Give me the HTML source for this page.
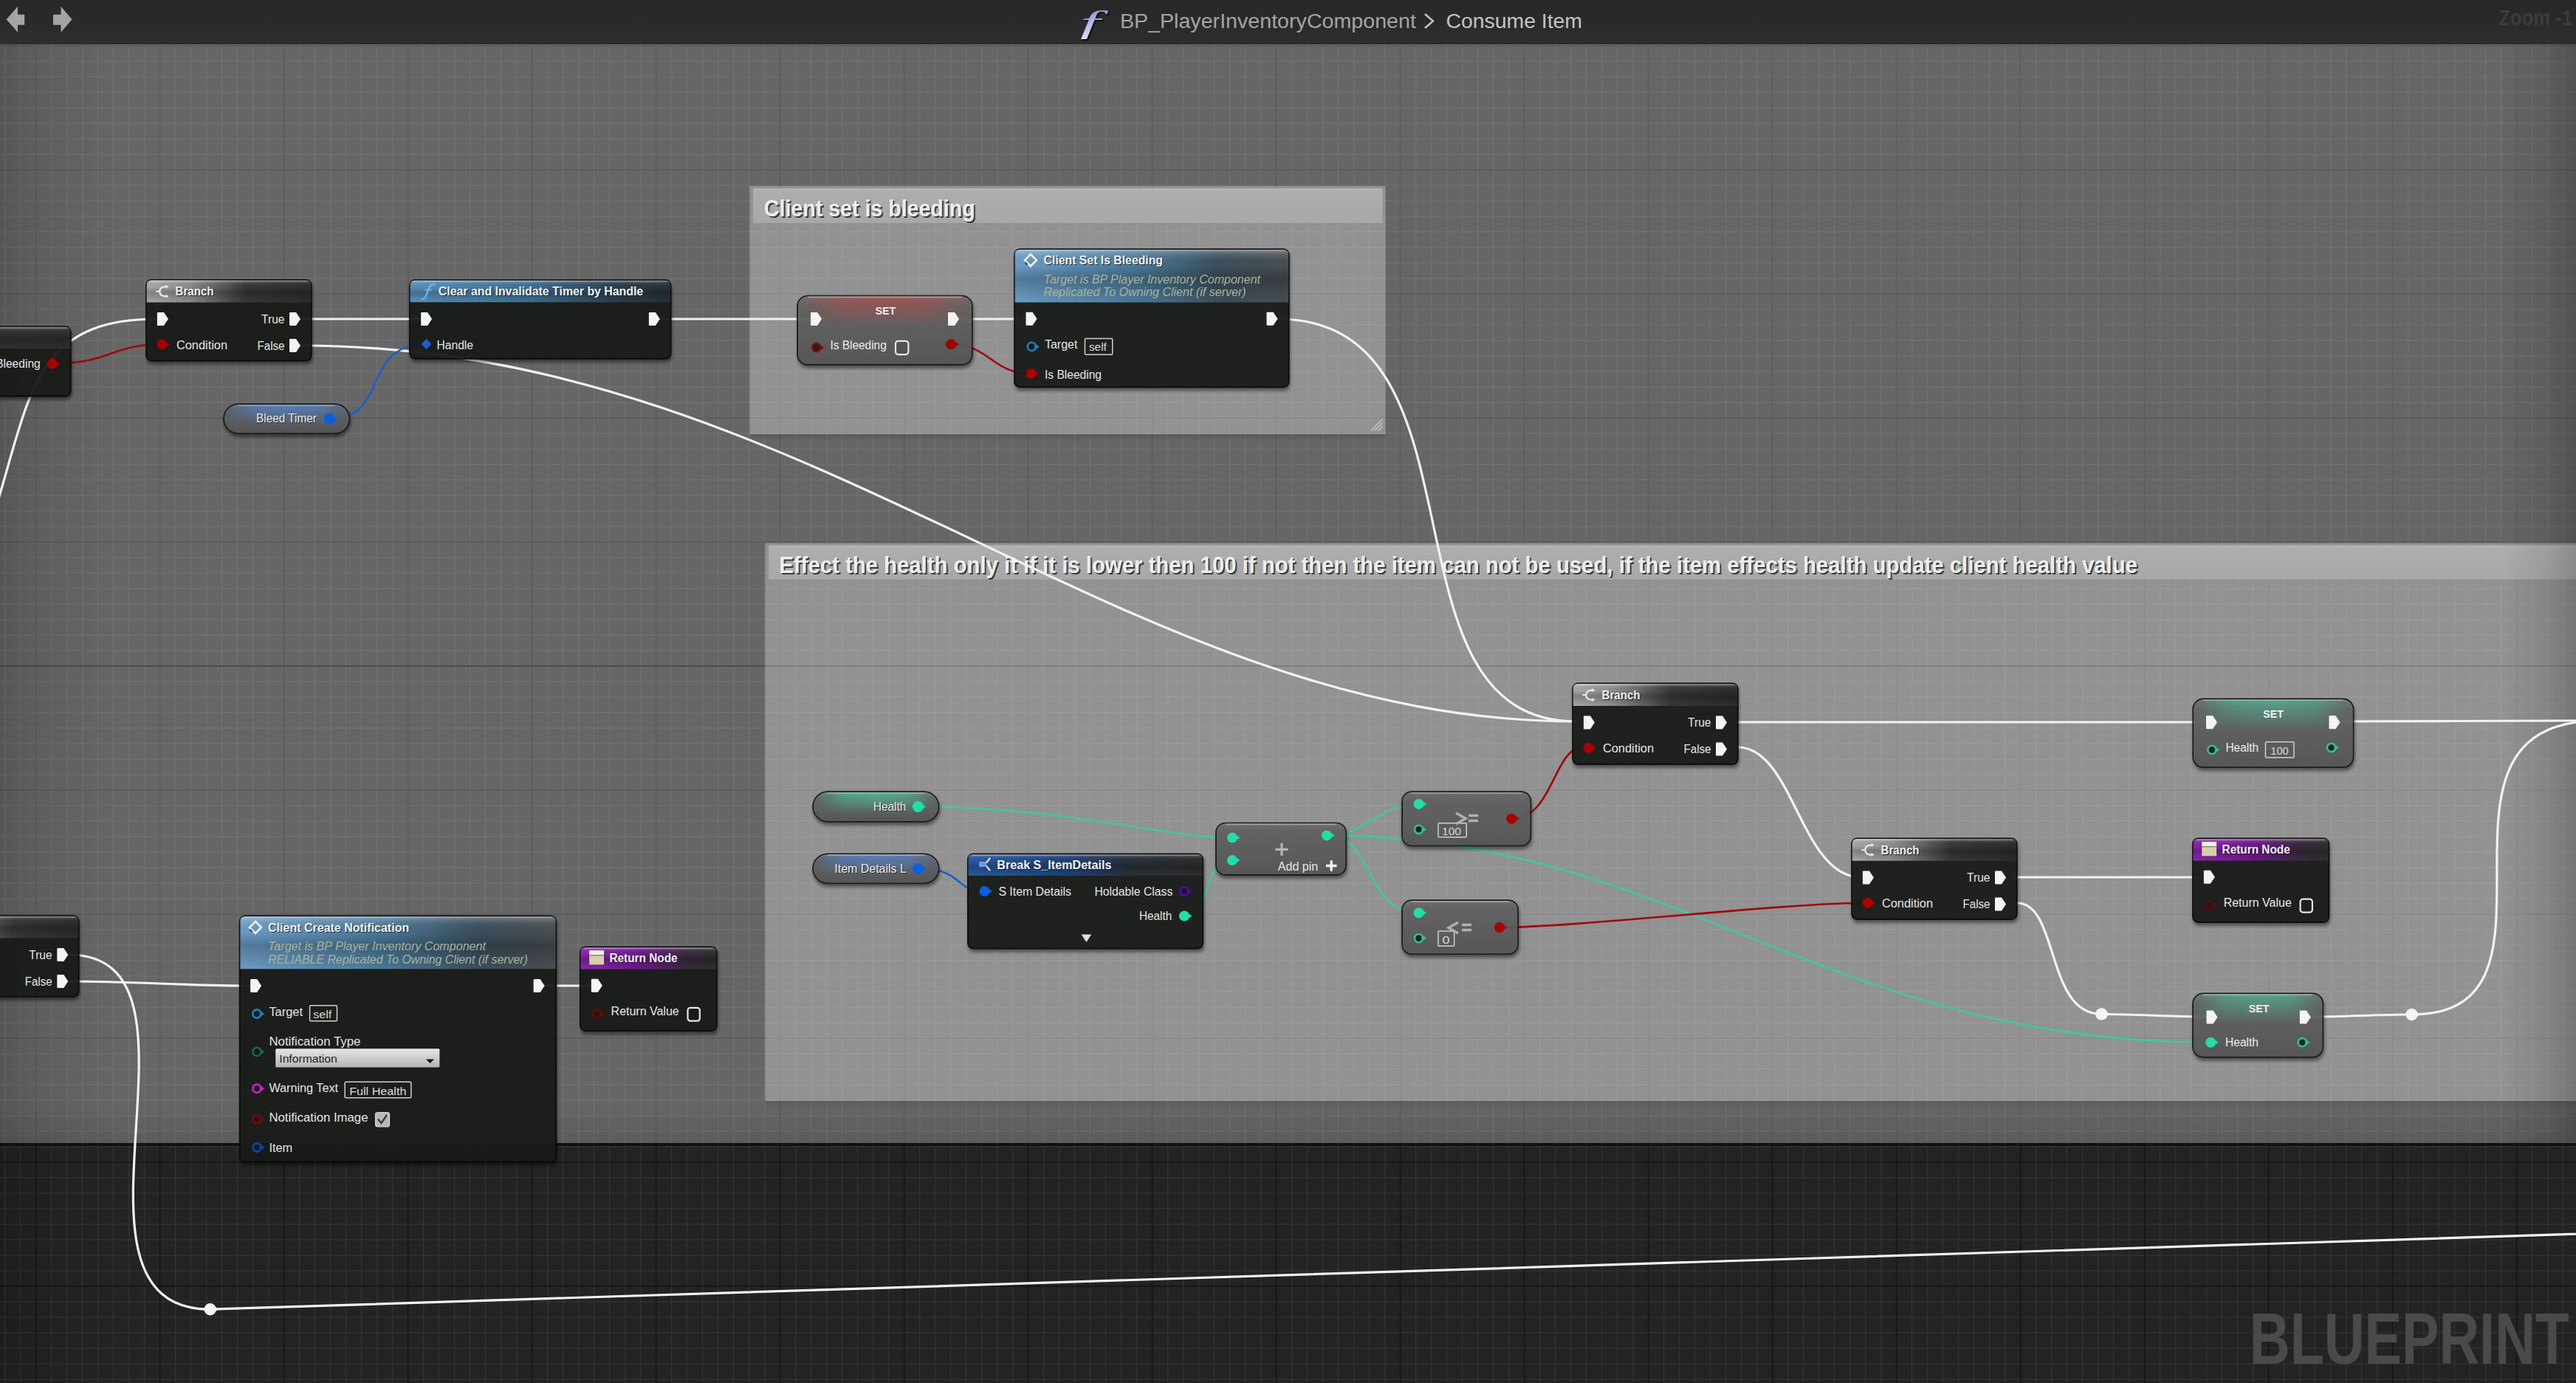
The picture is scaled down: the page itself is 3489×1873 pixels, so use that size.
<!DOCTYPE html>
<html><head><meta charset="utf-8"><style>
html,body{margin:0;padding:0;background:#666;overflow:hidden;width:3489px;height:1873px}
svg{display:block}
</style></head><body>
<svg width="3489" height="1873" viewBox="0 0 3489 1873">

<defs>
 <filter id="nshadow" x="-20%" y="-20%" width="140%" height="160%">
   <feGaussianBlur in="SourceAlpha" stdDeviation="3"/>
   <feOffset dx="1" dy="4"/>
   <feComponentTransfer><feFuncA type="linear" slope="0.55"/></feComponentTransfer>
   <feMerge><feMergeNode/><feMergeNode in="SourceGraphic"/></feMerge>
 </filter>
 <filter id="blur2"><feGaussianBlur stdDeviation="2"/></filter>
 <filter id="blur4"><feGaussianBlur stdDeviation="5"/></filter>
 <linearGradient id="vigL" x1="0" x2="1" y1="0" y2="0">
   <stop offset="0" stop-color="#000" stop-opacity="0.16"/>
   <stop offset="0.3" stop-color="#000" stop-opacity="0.08"/>
   <stop offset="1" stop-color="#000" stop-opacity="0"/>
 </linearGradient>
 <linearGradient id="vigR" x1="1" x2="0" y1="0" y2="0">
   <stop offset="0" stop-color="#000" stop-opacity="0.20"/>
   <stop offset="0.4" stop-color="#000" stop-opacity="0.09"/>
   <stop offset="1" stop-color="#000" stop-opacity="0"/>
 </linearGradient>
 <linearGradient id="vigB" x1="0" x2="0" y1="0" y2="1">
   <stop offset="0" stop-color="#000" stop-opacity="0"/>
   <stop offset="1" stop-color="#000" stop-opacity="0.10"/>
 </linearGradient>
 <linearGradient id="topbar" x1="0" x2="0" y1="0" y2="1">
   <stop offset="0" stop-color="#202020" stop-opacity="0.9"/>
   <stop offset="1" stop-color="#272727" stop-opacity="0.9"/>
 </linearGradient>
 <linearGradient id="cshadow" x1="0" x2="0" y1="0" y2="1">
   <stop offset="0" stop-color="#000" stop-opacity="0.10"/>
   <stop offset="1" stop-color="#000" stop-opacity="0"/>
 </linearGradient>
 <linearGradient id="ctitle" x1="0" x2="0" y1="0" y2="1">
   <stop offset="0" stop-color="#b4b4b4"/>
   <stop offset="0.12" stop-color="#adadad"/>
   <stop offset="1" stop-color="#a8a8a8"/>
 </linearGradient>
 <linearGradient id="fgrad" x1="0" x2="0" y1="0" y2="1">
   <stop offset="0" stop-color="#8a8fd8"/>
   <stop offset="1" stop-color="#d8dcf0"/>
 </linearGradient>
 <linearGradient id="hgloss" x1="0" x2="0" y1="0" y2="1">
   <stop offset="0" stop-color="#fff" stop-opacity="0.30"/>
   <stop offset="0.1" stop-color="#fff" stop-opacity="0.10"/>
   <stop offset="0.3" stop-color="#000" stop-opacity="0.0"/>
   <stop offset="0.55" stop-color="#000" stop-opacity="0.22"/>
   <stop offset="0.8" stop-color="#000" stop-opacity="0.10"/>
   <stop offset="1" stop-color="#000" stop-opacity="0.0"/>
 </linearGradient>
 <linearGradient id="hglossB" x1="0" x2="0" y1="0" y2="1">
   <stop offset="0" stop-color="#fff" stop-opacity="0.30"/>
   <stop offset="0.1" stop-color="#fff" stop-opacity="0.12"/>
   <stop offset="0.35" stop-color="#000" stop-opacity="0.0"/>
   <stop offset="1" stop-color="#000" stop-opacity="0.15"/>
 </linearGradient>
 <linearGradient id="cmpfill" x1="0" x2="0" y1="0" y2="1">
   <stop offset="0" stop-color="#707070"/>
   <stop offset="0.15" stop-color="#646464"/>
   <stop offset="0.6" stop-color="#5e5e5e"/>
   <stop offset="1" stop-color="#575757"/>
 </linearGradient>
 <linearGradient id="ddfill" x1="0" x2="0" y1="0" y2="1">
   <stop offset="0" stop-color="#e6e6e6"/>
   <stop offset="1" stop-color="#b4b4b4"/>
 </linearGradient>
</defs>

<defs><linearGradient id="hg1" x1="0" x2="1" y1="0" y2="0"><stop offset="0" stop-color="#a8a8a8" stop-opacity="1"/><stop offset="0.25" stop-color="#8c8c8c" stop-opacity="1"/><stop offset="0.6" stop-color="#383838" stop-opacity="1"/><stop offset="1" stop-color="#2c2c2c" stop-opacity="1"/></linearGradient><linearGradient id="hg2" x1="0" x2="1" y1="0" y2="0"><stop offset="0" stop-color="#a8a8a8" stop-opacity="1"/><stop offset="0.25" stop-color="#8c8c8c" stop-opacity="1"/><stop offset="0.6" stop-color="#383838" stop-opacity="1"/><stop offset="1" stop-color="#2c2c2c" stop-opacity="1"/></linearGradient><linearGradient id="hg3" x1="0" x2="1" y1="0" y2="0"><stop offset="0" stop-color="#a8a8a8" stop-opacity="1"/><stop offset="0.25" stop-color="#8c8c8c" stop-opacity="1"/><stop offset="0.6" stop-color="#383838" stop-opacity="1"/><stop offset="1" stop-color="#2c2c2c" stop-opacity="1"/></linearGradient><linearGradient id="hg4" x1="0" x2="1" y1="0" y2="0"><stop offset="0" stop-color="#4c7ba0" stop-opacity="1"/><stop offset="0.4" stop-color="#3c4c58" stop-opacity="1"/><stop offset="0.62" stop-color="#303230" stop-opacity="1"/><stop offset="1" stop-color="#2e2e2e" stop-opacity="1"/></linearGradient><linearGradient id="hg5" x1="0" x2="1" y1="0" y2="0"><stop offset="0" stop-color="#a8a8a8" stop-opacity="1"/><stop offset="0.25" stop-color="#8c8c8c" stop-opacity="1"/><stop offset="0.6" stop-color="#383838" stop-opacity="1"/><stop offset="1" stop-color="#2c2c2c" stop-opacity="1"/></linearGradient><linearGradient id="hg6" x1="0" x2="1" y1="0" y2="0"><stop offset="0" stop-color="#5a90bc" stop-opacity="1"/><stop offset="0.45" stop-color="#3f6f93" stop-opacity="1"/><stop offset="0.8" stop-color="#2c3e4c" stop-opacity="1"/><stop offset="1" stop-color="#283038" stop-opacity="1"/></linearGradient><radialGradient id="gl7" cx="0.5" cy="0.5" r="0.5"><stop offset="0" stop-color="#4f86d8" stop-opacity="0.75"/><stop offset="0.55" stop-color="#4f86d8" stop-opacity="0.41250000000000003"/><stop offset="1" stop-color="#4f86d8" stop-opacity="0"/></radialGradient><clipPath id="cl8"><rect x="304" y="548.2" width="168.5" height="38" rx="19"/></clipPath><linearGradient id="vg9" x1="0" x2="0" y1="0" y2="1"><stop offset="0" stop-color="#4f86d8" stop-opacity="0.75"/><stop offset="0.45" stop-color="#4f86d8" stop-opacity="0.44999999999999996"/><stop offset="1" stop-color="#4f86d8" stop-opacity="0"/></linearGradient><linearGradient id="hm11" x1="0" x2="1" y1="0" y2="0"><stop offset="0" stop-color="#fff" stop-opacity="0"/><stop offset="0.25" stop-color="#fff" stop-opacity="0.85"/><stop offset="0.5" stop-color="#fff" stop-opacity="1"/><stop offset="0.75" stop-color="#fff" stop-opacity="0.85"/><stop offset="1" stop-color="#fff" stop-opacity="0"/></linearGradient><mask id="mk10"><rect x="302" y="546.2" width="172.5" height="42" fill="url(#hm11)"/></mask><radialGradient id="gl12" cx="0.5" cy="0.5" r="0.5"><stop offset="0" stop-color="#c04848" stop-opacity="0.6"/><stop offset="0.55" stop-color="#c04848" stop-opacity="0.33"/><stop offset="1" stop-color="#c04848" stop-opacity="0"/></radialGradient><clipPath id="cl13"><rect x="1081.1" y="401.6" width="234.7" height="91.4" rx="13"/></clipPath><linearGradient id="vg14" x1="0" x2="0" y1="0" y2="1"><stop offset="0" stop-color="#c04848" stop-opacity="0.6"/><stop offset="0.45" stop-color="#c04848" stop-opacity="0.36"/><stop offset="1" stop-color="#c04848" stop-opacity="0"/></linearGradient><linearGradient id="hm16" x1="0" x2="1" y1="0" y2="0"><stop offset="0" stop-color="#fff" stop-opacity="0"/><stop offset="0.25" stop-color="#fff" stop-opacity="0.85"/><stop offset="0.5" stop-color="#fff" stop-opacity="1"/><stop offset="0.75" stop-color="#fff" stop-opacity="0.85"/><stop offset="1" stop-color="#fff" stop-opacity="0"/></linearGradient><mask id="mk15"><rect x="1079.1" y="399.6" width="238.7" height="95.4" fill="url(#hm16)"/></mask><linearGradient id="hg17" x1="0" x2="1" y1="0" y2="0"><stop offset="0" stop-color="#6a9cc4" stop-opacity="1"/><stop offset="0.45" stop-color="#4a7898" stop-opacity="1"/><stop offset="0.75" stop-color="#3a4e5c" stop-opacity="1"/><stop offset="1" stop-color="#4a4e50" stop-opacity="1"/></linearGradient><radialGradient id="gl18" cx="0.5" cy="0.5" r="0.5"><stop offset="0" stop-color="#48c8a0" stop-opacity="0.6"/><stop offset="0.55" stop-color="#48c8a0" stop-opacity="0.33"/><stop offset="1" stop-color="#48c8a0" stop-opacity="0"/></radialGradient><clipPath id="cl19"><rect x="2971.3" y="947.5" width="215.2" height="90.6" rx="13"/></clipPath><linearGradient id="vg20" x1="0" x2="0" y1="0" y2="1"><stop offset="0" stop-color="#48c8a0" stop-opacity="0.6"/><stop offset="0.45" stop-color="#48c8a0" stop-opacity="0.36"/><stop offset="1" stop-color="#48c8a0" stop-opacity="0"/></linearGradient><linearGradient id="hm22" x1="0" x2="1" y1="0" y2="0"><stop offset="0" stop-color="#fff" stop-opacity="0"/><stop offset="0.25" stop-color="#fff" stop-opacity="0.85"/><stop offset="0.5" stop-color="#fff" stop-opacity="1"/><stop offset="0.75" stop-color="#fff" stop-opacity="0.85"/><stop offset="1" stop-color="#fff" stop-opacity="0"/></linearGradient><mask id="mk21"><rect x="2969.3" y="945.5" width="219.2" height="94.6" fill="url(#hm22)"/></mask><radialGradient id="gl23" cx="0.5" cy="0.5" r="0.5"><stop offset="0" stop-color="#48c8a0" stop-opacity="0.75"/><stop offset="0.55" stop-color="#48c8a0" stop-opacity="0.41250000000000003"/><stop offset="1" stop-color="#48c8a0" stop-opacity="0"/></radialGradient><clipPath id="cl24"><rect x="1102.1" y="1073.2" width="168.5" height="38.6" rx="19"/></clipPath><linearGradient id="vg25" x1="0" x2="0" y1="0" y2="1"><stop offset="0" stop-color="#48c8a0" stop-opacity="0.75"/><stop offset="0.45" stop-color="#48c8a0" stop-opacity="0.44999999999999996"/><stop offset="1" stop-color="#48c8a0" stop-opacity="0"/></linearGradient><linearGradient id="hm27" x1="0" x2="1" y1="0" y2="0"><stop offset="0" stop-color="#fff" stop-opacity="0"/><stop offset="0.25" stop-color="#fff" stop-opacity="0.85"/><stop offset="0.5" stop-color="#fff" stop-opacity="1"/><stop offset="0.75" stop-color="#fff" stop-opacity="0.85"/><stop offset="1" stop-color="#fff" stop-opacity="0"/></linearGradient><mask id="mk26"><rect x="1100.1" y="1071.2" width="172.5" height="42.6" fill="url(#hm27)"/></mask><radialGradient id="gl28" cx="0.5" cy="0.5" r="0.5"><stop offset="0" stop-color="#4f86d8" stop-opacity="0.75"/><stop offset="0.55" stop-color="#4f86d8" stop-opacity="0.41250000000000003"/><stop offset="1" stop-color="#4f86d8" stop-opacity="0"/></radialGradient><clipPath id="cl29"><rect x="1102.1" y="1157.3" width="168.5" height="38" rx="19"/></clipPath><linearGradient id="vg30" x1="0" x2="0" y1="0" y2="1"><stop offset="0" stop-color="#4f86d8" stop-opacity="0.75"/><stop offset="0.45" stop-color="#4f86d8" stop-opacity="0.44999999999999996"/><stop offset="1" stop-color="#4f86d8" stop-opacity="0"/></linearGradient><linearGradient id="hm32" x1="0" x2="1" y1="0" y2="0"><stop offset="0" stop-color="#fff" stop-opacity="0"/><stop offset="0.25" stop-color="#fff" stop-opacity="0.85"/><stop offset="0.5" stop-color="#fff" stop-opacity="1"/><stop offset="0.75" stop-color="#fff" stop-opacity="0.85"/><stop offset="1" stop-color="#fff" stop-opacity="0"/></linearGradient><mask id="mk31"><rect x="1100.1" y="1155.3" width="172.5" height="42" fill="url(#hm32)"/></mask><linearGradient id="hg33" x1="0" x2="1" y1="0" y2="0"><stop offset="0" stop-color="#2a5aa0" stop-opacity="1"/><stop offset="0.4" stop-color="#1e4478" stop-opacity="1"/><stop offset="0.7" stop-color="#2a3038" stop-opacity="1"/><stop offset="1" stop-color="#2e2e2e" stop-opacity="1"/></linearGradient><radialGradient id="gl34" cx="0.5" cy="0.5" r="0.5"><stop offset="0" stop-color="None" stop-opacity="0.85"/><stop offset="0.55" stop-color="None" stop-opacity="0.4675"/><stop offset="1" stop-color="None" stop-opacity="0"/></radialGradient><clipPath id="cl35"><rect x="1648" y="1115.6" width="174.1" height="68.4" rx="12"/></clipPath><radialGradient id="gl36" cx="0.5" cy="0.5" r="0.5"><stop offset="0" stop-color="None" stop-opacity="0.85"/><stop offset="0.55" stop-color="None" stop-opacity="0.4675"/><stop offset="1" stop-color="None" stop-opacity="0"/></radialGradient><clipPath id="cl37"><rect x="1900.1" y="1073.2" width="172.2" height="71.2" rx="12"/></clipPath><radialGradient id="gl38" cx="0.5" cy="0.5" r="0.5"><stop offset="0" stop-color="None" stop-opacity="0.85"/><stop offset="0.55" stop-color="None" stop-opacity="0.4675"/><stop offset="1" stop-color="None" stop-opacity="0"/></radialGradient><clipPath id="cl39"><rect x="1900.1" y="1220.1" width="155" height="71.1" rx="12"/></clipPath><linearGradient id="hg40" x1="0" x2="1" y1="0" y2="0"><stop offset="0" stop-color="#8a26b0" stop-opacity="1"/><stop offset="0.45" stop-color="#6c1a8c" stop-opacity="1"/><stop offset="0.78" stop-color="#3a2a40" stop-opacity="1"/><stop offset="1" stop-color="#2e2e2e" stop-opacity="1"/></linearGradient><linearGradient id="hg41" x1="0" x2="1" y1="0" y2="0"><stop offset="0" stop-color="#8a26b0" stop-opacity="1"/><stop offset="0.45" stop-color="#6c1a8c" stop-opacity="1"/><stop offset="0.78" stop-color="#3a2a40" stop-opacity="1"/><stop offset="1" stop-color="#2e2e2e" stop-opacity="1"/></linearGradient><radialGradient id="gl42" cx="0.5" cy="0.5" r="0.5"><stop offset="0" stop-color="#48c8a0" stop-opacity="0.6"/><stop offset="0.55" stop-color="#48c8a0" stop-opacity="0.33"/><stop offset="1" stop-color="#48c8a0" stop-opacity="0"/></radialGradient><clipPath id="cl43"><rect x="2971.1" y="1346.4" width="174.2" height="84.4" rx="13"/></clipPath><linearGradient id="vg44" x1="0" x2="0" y1="0" y2="1"><stop offset="0" stop-color="#48c8a0" stop-opacity="0.6"/><stop offset="0.45" stop-color="#48c8a0" stop-opacity="0.36"/><stop offset="1" stop-color="#48c8a0" stop-opacity="0"/></linearGradient><linearGradient id="hm46" x1="0" x2="1" y1="0" y2="0"><stop offset="0" stop-color="#fff" stop-opacity="0"/><stop offset="0.25" stop-color="#fff" stop-opacity="0.85"/><stop offset="0.5" stop-color="#fff" stop-opacity="1"/><stop offset="0.75" stop-color="#fff" stop-opacity="0.85"/><stop offset="1" stop-color="#fff" stop-opacity="0"/></linearGradient><mask id="mk45"><rect x="2969.1" y="1344.4" width="178.2" height="88.4" fill="url(#hm46)"/></mask><linearGradient id="hg47" x1="0" x2="1" y1="0" y2="0"><stop offset="0" stop-color="#6a9cc4" stop-opacity="1"/><stop offset="0.45" stop-color="#4a7898" stop-opacity="1"/><stop offset="0.75" stop-color="#3a4e5c" stop-opacity="1"/><stop offset="1" stop-color="#4a4e50" stop-opacity="1"/></linearGradient></defs>
<rect x="0" y="0" width="3489" height="1548" fill="#666666"/>
<path d="M6.6 0V1548M27.6 0V1548M69.6 0V1548M90.6 0V1548M111.6 0V1548M132.6 0V1548M153.6 0V1548M174.6 0V1548M195.6 0V1548M237.6 0V1548M258.6 0V1548M279.6 0V1548M300.6 0V1548M321.6 0V1548M342.6 0V1548M363.6 0V1548M405.6 0V1548M426.6 0V1548M447.6 0V1548M468.6 0V1548M489.6 0V1548M510.6 0V1548M531.6 0V1548M573.6 0V1548M594.6 0V1548M615.6 0V1548M636.6 0V1548M657.6 0V1548M678.6 0V1548M699.6 0V1548M741.6 0V1548M762.6 0V1548M783.6 0V1548M804.6 0V1548M825.6 0V1548M846.6 0V1548M867.6 0V1548M909.6 0V1548M930.6 0V1548M951.6 0V1548M972.6 0V1548M993.6 0V1548M1014.6 0V1548M1035.6 0V1548M1077.6 0V1548M1098.6 0V1548M1119.6 0V1548M1140.6 0V1548M1161.6 0V1548M1182.6 0V1548M1203.6 0V1548M1245.6 0V1548M1266.6 0V1548M1287.6 0V1548M1308.6 0V1548M1329.6 0V1548M1350.6 0V1548M1371.6 0V1548M1413.6 0V1548M1434.6 0V1548M1455.6 0V1548M1476.6 0V1548M1497.6 0V1548M1518.6 0V1548M1539.6 0V1548M1581.6 0V1548M1602.6 0V1548M1623.6 0V1548M1644.6 0V1548M1665.6 0V1548M1686.6 0V1548M1707.6 0V1548M1749.6 0V1548M1770.6 0V1548M1791.6 0V1548M1812.6 0V1548M1833.6 0V1548M1854.6 0V1548M1875.6 0V1548M1917.6 0V1548M1938.6 0V1548M1959.6 0V1548M1980.6 0V1548M2001.6 0V1548M2022.6 0V1548M2043.6 0V1548M2085.6 0V1548M2106.6 0V1548M2127.6 0V1548M2148.6 0V1548M2169.6 0V1548M2190.6 0V1548M2211.6 0V1548M2253.6 0V1548M2274.6 0V1548M2295.6 0V1548M2316.6 0V1548M2337.6 0V1548M2358.6 0V1548M2379.6 0V1548M2421.6 0V1548M2442.6 0V1548M2463.6 0V1548M2484.6 0V1548M2505.6 0V1548M2526.6 0V1548M2547.6 0V1548M2589.6 0V1548M2610.6 0V1548M2631.6 0V1548M2652.6 0V1548M2673.6 0V1548M2694.6 0V1548M2715.6 0V1548M2757.6 0V1548M2778.6 0V1548M2799.6 0V1548M2820.6 0V1548M2841.6 0V1548M2862.6 0V1548M2883.6 0V1548M2925.6 0V1548M2946.6 0V1548M2967.6 0V1548M2988.6 0V1548M3009.6 0V1548M3030.6 0V1548M3051.6 0V1548M3093.6 0V1548M3114.6 0V1548M3135.6 0V1548M3156.6 0V1548M3177.6 0V1548M3198.6 0V1548M3219.6 0V1548M3261.6 0V1548M3282.6 0V1548M3303.6 0V1548M3324.6 0V1548M3345.6 0V1548M3366.6 0V1548M3387.6 0V1548M3429.6 0V1548M3450.6 0V1548M3471.6 0V1548M0 20.0H3489M0 41.0H3489M0 83.0H3489M0 104.0H3489M0 125.0H3489M0 146.0H3489M0 167.0H3489M0 188.0H3489M0 209.0H3489M0 251.0H3489M0 272.0H3489M0 293.0H3489M0 314.0H3489M0 335.0H3489M0 356.0H3489M0 377.0H3489M0 419.0H3489M0 440.0H3489M0 461.0H3489M0 482.0H3489M0 503.0H3489M0 524.0H3489M0 545.0H3489M0 587.0H3489M0 608.0H3489M0 629.0H3489M0 650.0H3489M0 671.0H3489M0 692.0H3489M0 713.0H3489M0 755.0H3489M0 776.0H3489M0 797.0H3489M0 818.0H3489M0 839.0H3489M0 860.0H3489M0 881.0H3489M0 923.0H3489M0 944.0H3489M0 965.0H3489M0 986.0H3489M0 1007.0H3489M0 1028.0H3489M0 1049.0H3489M0 1091.0H3489M0 1112.0H3489M0 1133.0H3489M0 1154.0H3489M0 1175.0H3489M0 1196.0H3489M0 1217.0H3489M0 1259.0H3489M0 1280.0H3489M0 1301.0H3489M0 1322.0H3489M0 1343.0H3489M0 1364.0H3489M0 1385.0H3489M0 1427.0H3489M0 1448.0H3489M0 1469.0H3489M0 1490.0H3489M0 1511.0H3489M0 1532.0H3489" stroke="#707070" stroke-width="1.5" fill="none"/>
<path d="M48.6 0V1548M216.6 0V1548M384.6 0V1548M552.6 0V1548M720.6 0V1548M888.6 0V1548M1056.6 0V1548M1224.6 0V1548M1392.6 0V1548M1560.6 0V1548M1728.6 0V1548M1896.6 0V1548M2064.6 0V1548M2232.6 0V1548M2400.6 0V1548M2568.6 0V1548M2736.6 0V1548M2904.6 0V1548M3072.6 0V1548M3240.6 0V1548M3408.6 0V1548M0 62.0H3489M0 230.0H3489M0 398.0H3489M0 566.0H3489M0 734.0H3489M0 1070.0H3489M0 1238.0H3489M0 1406.0H3489" stroke="#5c5c5c" stroke-width="1.6" fill="none"/>
<path d="M0 902.0H3489" stroke="#4c4c4c" stroke-width="2" fill="none"/>
<rect x="0" y="1492" width="3489" height="56" fill="url(#vigB)"/>
<rect x="0" y="1548" width="3489" height="325" fill="#232323"/>
<path d="M6.6 1548V1873M27.6 1548V1873M69.6 1548V1873M90.6 1548V1873M111.6 1548V1873M132.6 1548V1873M153.6 1548V1873M174.6 1548V1873M195.6 1548V1873M237.6 1548V1873M258.6 1548V1873M279.6 1548V1873M300.6 1548V1873M321.6 1548V1873M342.6 1548V1873M363.6 1548V1873M405.6 1548V1873M426.6 1548V1873M447.6 1548V1873M468.6 1548V1873M489.6 1548V1873M510.6 1548V1873M531.6 1548V1873M573.6 1548V1873M594.6 1548V1873M615.6 1548V1873M636.6 1548V1873M657.6 1548V1873M678.6 1548V1873M699.6 1548V1873M741.6 1548V1873M762.6 1548V1873M783.6 1548V1873M804.6 1548V1873M825.6 1548V1873M846.6 1548V1873M867.6 1548V1873M909.6 1548V1873M930.6 1548V1873M951.6 1548V1873M972.6 1548V1873M993.6 1548V1873M1014.6 1548V1873M1035.6 1548V1873M1077.6 1548V1873M1098.6 1548V1873M1119.6 1548V1873M1140.6 1548V1873M1161.6 1548V1873M1182.6 1548V1873M1203.6 1548V1873M1245.6 1548V1873M1266.6 1548V1873M1287.6 1548V1873M1308.6 1548V1873M1329.6 1548V1873M1350.6 1548V1873M1371.6 1548V1873M1413.6 1548V1873M1434.6 1548V1873M1455.6 1548V1873M1476.6 1548V1873M1497.6 1548V1873M1518.6 1548V1873M1539.6 1548V1873M1581.6 1548V1873M1602.6 1548V1873M1623.6 1548V1873M1644.6 1548V1873M1665.6 1548V1873M1686.6 1548V1873M1707.6 1548V1873M1749.6 1548V1873M1770.6 1548V1873M1791.6 1548V1873M1812.6 1548V1873M1833.6 1548V1873M1854.6 1548V1873M1875.6 1548V1873M1917.6 1548V1873M1938.6 1548V1873M1959.6 1548V1873M1980.6 1548V1873M2001.6 1548V1873M2022.6 1548V1873M2043.6 1548V1873M2085.6 1548V1873M2106.6 1548V1873M2127.6 1548V1873M2148.6 1548V1873M2169.6 1548V1873M2190.6 1548V1873M2211.6 1548V1873M2253.6 1548V1873M2274.6 1548V1873M2295.6 1548V1873M2316.6 1548V1873M2337.6 1548V1873M2358.6 1548V1873M2379.6 1548V1873M2421.6 1548V1873M2442.6 1548V1873M2463.6 1548V1873M2484.6 1548V1873M2505.6 1548V1873M2526.6 1548V1873M2547.6 1548V1873M2589.6 1548V1873M2610.6 1548V1873M2631.6 1548V1873M2652.6 1548V1873M2673.6 1548V1873M2694.6 1548V1873M2715.6 1548V1873M2757.6 1548V1873M2778.6 1548V1873M2799.6 1548V1873M2820.6 1548V1873M2841.6 1548V1873M2862.6 1548V1873M2883.6 1548V1873M2925.6 1548V1873M2946.6 1548V1873M2967.6 1548V1873M2988.6 1548V1873M3009.6 1548V1873M3030.6 1548V1873M3051.6 1548V1873M3093.6 1548V1873M3114.6 1548V1873M3135.6 1548V1873M3156.6 1548V1873M3177.6 1548V1873M3198.6 1548V1873M3219.6 1548V1873M3261.6 1548V1873M3282.6 1548V1873M3303.6 1548V1873M3324.6 1548V1873M3345.6 1548V1873M3366.6 1548V1873M3387.6 1548V1873M3429.6 1548V1873M3450.6 1548V1873M3471.6 1548V1873M0 1553.0H3489M0 1595.0H3489M0 1616.0H3489M0 1637.0H3489M0 1658.0H3489M0 1679.0H3489M0 1700.0H3489M0 1721.0H3489M0 1763.0H3489M0 1784.0H3489M0 1805.0H3489M0 1826.0H3489M0 1847.0H3489M0 1868.0H3489" stroke="#323232" stroke-width="1.5" fill="none"/>
<path d="M48.6 1548V1873M216.6 1548V1873M384.6 1548V1873M552.6 1548V1873M720.6 1548V1873M888.6 1548V1873M1056.6 1548V1873M1224.6 1548V1873M1392.6 1548V1873M1560.6 1548V1873M1728.6 1548V1873M1896.6 1548V1873M2064.6 1548V1873M2232.6 1548V1873M2400.6 1548V1873M2568.6 1548V1873M2736.6 1548V1873M2904.6 1548V1873M3072.6 1548V1873M3240.6 1548V1873M3408.6 1548V1873M0 1574.0H3489M0 1742.0H3489" stroke="#151515" stroke-width="1.6" fill="none"/>
<rect x="0" y="1548" width="3489" height="4" fill="#121212"/>
<rect x="1015.5" y="588" width="861.0" height="12" fill="url(#cshadow)"/>
<rect x="1015.5" y="252" width="861.0" height="336" fill="#ffffff" fill-opacity="0.29"/>
<rect x="1020.0" y="255" width="852.5" height="47" rx="2" fill="url(#ctitle)"/>
<path d="M1857 583L1872 568M1862 583L1872 573M1867 583L1872 578" stroke="#c4c4c4" stroke-width="1.6" stroke-linecap="round"/>
<rect x="1036.5" y="1491" width="2472.5" height="12" fill="url(#cshadow)"/>
<rect x="1036.5" y="735.5" width="2472.5" height="755.5" fill="#ffffff" fill-opacity="0.29"/>
<rect x="1041.0" y="738.5" width="2464.0" height="46.200000000000045" rx="2" fill="url(#ctitle)"/>
<text x="1036.8" y="295.1" font-family="Liberation Sans" font-size="32" font-weight="bold" font-style="normal" fill="#3a3a3a" text-anchor="start" textLength="285.9" lengthAdjust="spacingAndGlyphs">Client set is bleeding</text><text x="1034.8" y="293.1" font-family="Liberation Sans" font-size="32" font-weight="bold" font-style="normal" fill="#eeeeee" text-anchor="start" textLength="285.9" lengthAdjust="spacingAndGlyphs">Client set is bleeding</text>
<text x="1057.3" y="777.6" font-family="Liberation Sans" font-size="31" font-weight="bold" font-style="normal" fill="#3a3a3a" text-anchor="start" textLength="1839.7" lengthAdjust="spacingAndGlyphs">Effect the health only it if it is lower then 100 if not then the item can not be used, if the item effects health update client health value</text><text x="1055.3" y="775.6" font-family="Liberation Sans" font-size="31" font-weight="bold" font-style="normal" fill="#eeeeee" text-anchor="start" textLength="1839.7" lengthAdjust="spacingAndGlyphs">Effect the health only it if it is lower then 100 if not then the item can not be used, if the item effects health update client health value</text>
<rect x="0" y="60" width="160" height="1813" fill="url(#vigL)"/>
<rect x="3389" y="60" width="100" height="1488" fill="url(#vigR)"/>
<path d="M71.0 492.4C151.9 492.4 148.4 466.4 219.5 466.4" fill="none" stroke="#a00808" stroke-width="2.6" stroke-linecap="round"/>
<path d="M407.0 468.0C1099.2 468.0 1519.0 977.0 2135.0 977.0" fill="none" stroke="#f2f2f2" stroke-width="3.2" stroke-linecap="round"/>
<path d="M446.2 567.2C527.5 567.2 489.2 466.0 577.5 466.0" fill="none" stroke="#1a5fd0" stroke-width="2.6" stroke-linecap="round"/>
<path d="M1288.0 466.5C1340.0 466.5 1344.0 506.0 1396.0 506.0" fill="none" stroke="#a00808" stroke-width="2.6" stroke-linecap="round"/>
<path d="M1730.0 432.0C2029.1 432.0 1855.7 977.0 2135.0 977.0" fill="none" stroke="#f2f2f2" stroke-width="3.2" stroke-linecap="round"/>
<path d="M2354.0 1012.0C2428.6 1012.0 2439.4 1188.0 2520.0 1188.0" fill="none" stroke="#f2f2f2" stroke-width="3.2" stroke-linecap="round"/>
<path d="M2732.0 1223.0C2788.7 1223.0 2770.9 1373.5 2846.0 1373.5" fill="none" stroke="#f2f2f2" stroke-width="3.2" stroke-linecap="round"/>
<path d="M3266.5 1374.0C3505.2 1374.0 3250.9 976.0 3520.0 976.0" fill="none" stroke="#f2f2f2" stroke-width="3.2" stroke-linecap="round"/>
<path d="M1243.5 1092.5C1436.2 1092.5 1585.6 1135.0 1669.0 1135.0" fill="none" stroke="#3fc9a1" stroke-width="2.6" stroke-linecap="round"/>
<path d="M1604.0 1240.5C1643.4 1240.5 1625.1 1165.0 1669.0 1165.0" fill="none" stroke="#3fc9a1" stroke-width="2.6" stroke-linecap="round"/>
<path d="M1243.5 1176.6C1306.9 1176.6 1290.7 1207.0 1333.5 1207.0" fill="none" stroke="#1a5fd0" stroke-width="2.6" stroke-linecap="round"/>
<path d="M1797.0 1131.4C1852.0 1131.4 1866.6 1089.0 1921.6 1089.0" fill="none" stroke="#3fc9a1" stroke-width="2.6" stroke-linecap="round"/>
<path d="M1797.0 1131.4C1860.0 1131.4 1849.3 1236.2 1921.6 1236.2" fill="none" stroke="#3fc9a1" stroke-width="2.6" stroke-linecap="round"/>
<path d="M1797.0 1131.4C2262.3 1131.4 2472.9 1411.7 2994.0 1411.7" fill="none" stroke="#3fc9a1" stroke-width="2.6" stroke-linecap="round"/>
<path d="M2047.2 1109.0C2104.2 1109.0 2103.8 1011.5 2145.0 1011.5" fill="none" stroke="#a00808" stroke-width="2.6" stroke-linecap="round"/>
<path d="M2031.0 1256.0C2132.7 1256.0 2418.8 1223.0 2520.0 1223.0" fill="none" stroke="#a00808" stroke-width="2.6" stroke-linecap="round"/>
<path d="M93.0 1293.0C308.8 1293.0 55.8 1773.2 284.7 1773.2" fill="none" stroke="#f2f2f2" stroke-width="3.2" stroke-linecap="round"/>
<path d="M-6404.9 1995.2C1366.2 1995.2 -435.2 432.0 212.0 432.0" fill="none" stroke="#f2f2f2" stroke-width="3.2" stroke-linecap="round"/>
<path d="M284.7 1773.2C590.0 1773.2 4316.9 1635.2 4617.8 1635.2" fill="none" stroke="#f2f2f2" stroke-width="3.2" stroke-linecap="round"/>
<path d="M407.0 432.0C461.3 432.0 515.7 432.0 570.0 432.0" fill="none" stroke="#f2f2f2" stroke-width="3.2" stroke-linecap="round"/>
<path d="M894.0 432.0C962.0 432.0 1030.0 432.0 1098.0 432.0" fill="none" stroke="#f2f2f2" stroke-width="3.2" stroke-linecap="round"/>
<path d="M1299.0 432.0C1329.0 432.0 1359.0 432.0 1389.0 432.0" fill="none" stroke="#f2f2f2" stroke-width="3.2" stroke-linecap="round"/>
<path d="M2350.0 978.0C2562.7 978.0 2775.3 978.0 2988.0 978.0" fill="none" stroke="#f2f2f2" stroke-width="3.2" stroke-linecap="round"/>
<path d="M3170.0 977.0C3276.7 977.0 3382.3 976.0 3489.0 976.0" fill="none" stroke="#f2f2f2" stroke-width="3.2" stroke-linecap="round"/>
<path d="M2725.0 1188.0C2811.7 1188.0 2898.3 1188.0 2985.0 1188.0" fill="none" stroke="#f2f2f2" stroke-width="3.2" stroke-linecap="round"/>
<path d="M2846.0 1373.5C2894.8 1373.5 2940.2 1377.0 2989.0 1377.0" fill="none" stroke="#f2f2f2" stroke-width="3.2" stroke-linecap="round"/>
<path d="M3129.0 1377.0C3175.8 1377.0 3219.7 1374.0 3266.5 1374.0" fill="none" stroke="#f2f2f2" stroke-width="3.2" stroke-linecap="round"/>
<path d="M93.0 1329.0C177.0 1329.0 255.0 1335.0 339.0 1335.0" fill="none" stroke="#f2f2f2" stroke-width="3.2" stroke-linecap="round"/>
<path d="M738.0 1335.0C759.0 1335.0 780.0 1335.0 801.0 1335.0" fill="none" stroke="#f2f2f2" stroke-width="3.2" stroke-linecap="round"/>
<circle cx="284.7" cy="1773.2" r="8.2" fill="#f4f4f4"/><path d="M290.7 1769.2L295.7 1773.2L290.7 1777.2Z" fill="#f4f4f4"/>
<circle cx="2846.4" cy="1373.4" r="8.2" fill="#f4f4f4"/><path d="M2852.4 1369.4L2857.4 1373.4L2852.4 1377.4Z" fill="#f4f4f4"/>
<circle cx="3266.5" cy="1374" r="8.2" fill="#f4f4f4"/><path d="M3272.5 1370L3277.5 1374L3272.5 1378Z" fill="#f4f4f4"/>
<rect x="198.2" y="382.1" width="225.5" height="111.5" rx="8" fill="#000" fill-opacity="0.45" filter="url(#blur2)"/>
<rect x="198.1" y="379.0" width="223.7" height="109.7" rx="7.5" fill="#1a1c1a" fill-opacity="0.90" stroke="#0a0a0a" stroke-opacity="0.95" stroke-width="1.8"/>
<path d="M198.7 409.40000000000003V386.1Q198.7 379.6 205.2 379.6H414.7Q421.2 379.6 421.2 386.1V409.40000000000003Z" fill="url(#hg1)"/>
<path d="M198.7 409.40000000000003V386.1Q198.7 379.6 205.2 379.6H414.7Q421.2 379.6 421.2 386.1V409.40000000000003Z" fill="url(#hgloss)"/>
<path d="M203.2 381.1H416.7" stroke="#fff" stroke-opacity="0.22" stroke-width="1.5"/>
<path d="M227.3 388.2Q216.3 387.2 216.3 394.7Q216.3 402.2 227.3 401.2" fill="none" stroke="#e8e8e8" stroke-width="2.2"/><path d="M211.3 394.7H216.3" stroke="#e8e8e8" stroke-width="2.2"/><path d="M224.3 385.7L228.3 388.2L224.3 390.7Z M224.3 398.7L228.3 401.2L224.3 403.7Z" fill="#e8e8e8"/>
<text x="238.5" y="401.3" font-family="Liberation Sans" font-size="16" font-weight="bold" font-style="normal" fill="#202020" text-anchor="start" textLength="52.0" lengthAdjust="spacingAndGlyphs">Branch</text><text x="237.5" y="400.3" font-family="Liberation Sans" font-size="16" font-weight="bold" font-style="normal" fill="#f0f0f0" text-anchor="start" textLength="52.0" lengthAdjust="spacingAndGlyphs">Branch</text>
<path d="M213.9 423.0H221.9L227.9 432.0L221.9 441.0H213.9Q212.9 441.0 212.9 440.0V424.0Q212.9 423.0 213.9 423.0Z" fill="#f4f4f4"/>
<path d="M393.0 423.0H401.0L407.0 432.0L401.0 441.0H393.0Q392.0 441.0 392.0 440.0V424.0Q392.0 423.0 393.0 423.0Z" fill="#f4f4f4"/>
<path d="M393.0 459.0H401.0L407.0 468.0L401.0 477.0H393.0Q392.0 477.0 392.0 476.0V460.0Q392.0 459.0 393.0 459.0Z" fill="#f4f4f4"/>
<circle cx="219.5" cy="466.4" r="7" fill="#a80000"/><path d="M223.5 461.9L230.0 466.4L223.5 470.9Z" fill="#a80000"/>
<text x="354.1" y="437.7" font-family="Liberation Sans" font-size="16" font-weight="normal" font-style="normal" fill="#e6e6e6" text-anchor="start" textLength="31.3" lengthAdjust="spacingAndGlyphs">True</text>
<text x="239.0" y="472.5" font-family="Liberation Sans" font-size="16" font-weight="normal" font-style="normal" fill="#e6e6e6" text-anchor="start" textLength="69.0" lengthAdjust="spacingAndGlyphs">Condition</text>
<text x="348.6" y="473.5" font-family="Liberation Sans" font-size="16" font-weight="normal" font-style="normal" fill="#e6e6e6" text-anchor="start" textLength="36.8" lengthAdjust="spacingAndGlyphs">False</text>
<rect x="2130.2" y="928.6" width="225.5" height="111.5" rx="8" fill="#000" fill-opacity="0.45" filter="url(#blur2)"/>
<rect x="2130.1" y="925.5" width="223.7" height="109.7" rx="7.5" fill="#1a1c1a" fill-opacity="0.90" stroke="#0a0a0a" stroke-opacity="0.95" stroke-width="1.8"/>
<path d="M2130.7 955.9V932.6Q2130.7 926.1 2137.2 926.1H2346.7Q2353.2 926.1 2353.2 932.6V955.9Z" fill="url(#hg2)"/>
<path d="M2130.7 955.9V932.6Q2130.7 926.1 2137.2 926.1H2346.7Q2353.2 926.1 2353.2 932.6V955.9Z" fill="url(#hgloss)"/>
<path d="M2135.2 927.6H2348.7" stroke="#fff" stroke-opacity="0.22" stroke-width="1.5"/>
<path d="M2159.2999999999997 934.7Q2148.2999999999997 933.7 2148.2999999999997 941.2Q2148.2999999999997 948.7 2159.2999999999997 947.7" fill="none" stroke="#e8e8e8" stroke-width="2.2"/><path d="M2143.2999999999997 941.2H2148.2999999999997" stroke="#e8e8e8" stroke-width="2.2"/><path d="M2156.2999999999997 932.2L2160.2999999999997 934.7L2156.2999999999997 937.2Z M2156.2999999999997 945.2L2160.2999999999997 947.7L2156.2999999999997 950.2Z" fill="#e8e8e8"/>
<text x="2170.5" y="947.8" font-family="Liberation Sans" font-size="16" font-weight="bold" font-style="normal" fill="#202020" text-anchor="start" textLength="52.0" lengthAdjust="spacingAndGlyphs">Branch</text><text x="2169.5" y="946.8" font-family="Liberation Sans" font-size="16" font-weight="bold" font-style="normal" fill="#f0f0f0" text-anchor="start" textLength="52.0" lengthAdjust="spacingAndGlyphs">Branch</text>
<path d="M2145.8999999999996 969.5H2153.8999999999996L2159.8999999999996 978.5L2153.8999999999996 987.5H2145.8999999999996Q2144.8999999999996 987.5 2144.8999999999996 986.5V970.5Q2144.8999999999996 969.5 2145.8999999999996 969.5Z" fill="#f4f4f4"/>
<path d="M2325.0 969.5H2333.0L2339.0 978.5L2333.0 987.5H2325.0Q2324.0 987.5 2324.0 986.5V970.5Q2324.0 969.5 2325.0 969.5Z" fill="#f4f4f4"/>
<path d="M2325.0 1005.5H2333.0L2339.0 1014.5L2333.0 1023.5H2325.0Q2324.0 1023.5 2324.0 1022.5V1006.5Q2324.0 1005.5 2325.0 1005.5Z" fill="#f4f4f4"/>
<circle cx="2151.5" cy="1012.9" r="7" fill="#a80000"/><path d="M2155.5 1008.4L2162.0 1012.9L2155.5 1017.4Z" fill="#a80000"/>
<text x="2286.1" y="984.2" font-family="Liberation Sans" font-size="16" font-weight="normal" font-style="normal" fill="#e6e6e6" text-anchor="start" textLength="31.3" lengthAdjust="spacingAndGlyphs">True</text>
<text x="2171.0" y="1019.0" font-family="Liberation Sans" font-size="16" font-weight="normal" font-style="normal" fill="#e6e6e6" text-anchor="start" textLength="69.0" lengthAdjust="spacingAndGlyphs">Condition</text>
<text x="2280.6" y="1020.0" font-family="Liberation Sans" font-size="16" font-weight="normal" font-style="normal" fill="#e6e6e6" text-anchor="start" textLength="36.8" lengthAdjust="spacingAndGlyphs">False</text>
<rect x="2508.2" y="1138.5" width="225.5" height="111.5" rx="8" fill="#000" fill-opacity="0.45" filter="url(#blur2)"/>
<rect x="2508.1" y="1135.4" width="223.7" height="109.7" rx="7.5" fill="#1a1c1a" fill-opacity="0.90" stroke="#0a0a0a" stroke-opacity="0.95" stroke-width="1.8"/>
<path d="M2508.7 1165.8V1142.5Q2508.7 1136.0 2515.2 1136.0H2724.7Q2731.2 1136.0 2731.2 1142.5V1165.8Z" fill="url(#hg3)"/>
<path d="M2508.7 1165.8V1142.5Q2508.7 1136.0 2515.2 1136.0H2724.7Q2731.2 1136.0 2731.2 1142.5V1165.8Z" fill="url(#hgloss)"/>
<path d="M2513.2 1137.5H2726.7" stroke="#fff" stroke-opacity="0.22" stroke-width="1.5"/>
<path d="M2537.3 1144.6Q2526.3 1143.6 2526.3 1151.1Q2526.3 1158.6 2537.3 1157.6" fill="none" stroke="#e8e8e8" stroke-width="2.2"/><path d="M2521.3 1151.1H2526.3" stroke="#e8e8e8" stroke-width="2.2"/><path d="M2534.3 1142.1L2538.3 1144.6L2534.3 1147.1Z M2534.3 1155.1L2538.3 1157.6L2534.3 1160.1Z" fill="#e8e8e8"/>
<text x="2548.5" y="1157.7" font-family="Liberation Sans" font-size="16" font-weight="bold" font-style="normal" fill="#202020" text-anchor="start" textLength="52.0" lengthAdjust="spacingAndGlyphs">Branch</text><text x="2547.5" y="1156.7" font-family="Liberation Sans" font-size="16" font-weight="bold" font-style="normal" fill="#f0f0f0" text-anchor="start" textLength="52.0" lengthAdjust="spacingAndGlyphs">Branch</text>
<path d="M2523.9 1179.4H2531.9L2537.9 1188.4L2531.9 1197.4H2523.9Q2522.9 1197.4 2522.9 1196.4V1180.4Q2522.9 1179.4 2523.9 1179.4Z" fill="#f4f4f4"/>
<path d="M2703.0 1179.4H2711.0L2717.0 1188.4L2711.0 1197.4H2703.0Q2702.0 1197.4 2702.0 1196.4V1180.4Q2702.0 1179.4 2703.0 1179.4Z" fill="#f4f4f4"/>
<path d="M2703.0 1215.4H2711.0L2717.0 1224.4L2711.0 1233.4H2703.0Q2702.0 1233.4 2702.0 1232.4V1216.4Q2702.0 1215.4 2703.0 1215.4Z" fill="#f4f4f4"/>
<circle cx="2529.5" cy="1222.8" r="7" fill="#a80000"/><path d="M2533.5 1218.3L2540.0 1222.8L2533.5 1227.3Z" fill="#a80000"/>
<text x="2664.1" y="1194.1" font-family="Liberation Sans" font-size="16" font-weight="normal" font-style="normal" fill="#e6e6e6" text-anchor="start" textLength="31.3" lengthAdjust="spacingAndGlyphs">True</text>
<text x="2549.0" y="1228.9" font-family="Liberation Sans" font-size="16" font-weight="normal" font-style="normal" fill="#e6e6e6" text-anchor="start" textLength="69.0" lengthAdjust="spacingAndGlyphs">Condition</text>
<text x="2658.6" y="1229.9" font-family="Liberation Sans" font-size="16" font-weight="normal" font-style="normal" fill="#e6e6e6" text-anchor="start" textLength="36.8" lengthAdjust="spacingAndGlyphs">False</text>
<rect x="-159" y="445.3" width="256.7" height="96.1" rx="8" fill="#000" fill-opacity="0.45" filter="url(#blur2)"/>
<rect x="-159.1" y="442.2" width="254.89999999999998" height="94.3" rx="7.5" fill="#1a1c1a" fill-opacity="0.90" stroke="#0a0a0a" stroke-opacity="0.95" stroke-width="1.8"/>
<path d="M-158.5 472.1V449.3Q-158.5 442.8 -152.0 442.8H88.69999999999999Q95.19999999999999 442.8 95.19999999999999 449.3V472.1Z" fill="url(#hg4)"/>
<path d="M-158.5 472.1V449.3Q-158.5 442.8 -152.0 442.8H88.69999999999999Q95.19999999999999 442.8 95.19999999999999 449.3V472.1Z" fill="url(#hgloss)"/>
<path d="M-154 444.3H90.69999999999999" stroke="#fff" stroke-opacity="0.22" stroke-width="1.5"/>
<circle cx="70.9" cy="492.4" r="7" fill="#a80000"/><path d="M74.9 487.9L81.4 492.4L74.9 496.9Z" fill="#a80000"/>
<text x="-22.3" y="498.0" font-family="Liberation Sans" font-size="16" font-weight="normal" font-style="normal" fill="#e6e6e6" text-anchor="start" textLength="77.0" lengthAdjust="spacingAndGlyphs">Is Bleeding</text>
<rect x="-117" y="1243.2" width="225.6" height="111.6" rx="8" fill="#000" fill-opacity="0.45" filter="url(#blur2)"/>
<rect x="-117.1" y="1240.1000000000001" width="223.79999999999998" height="109.8" rx="7.5" fill="#1a1c1a" fill-opacity="0.90" stroke="#0a0a0a" stroke-opacity="0.95" stroke-width="1.8"/>
<path d="M-116.5 1270.3V1247.2Q-116.5 1240.7 -110.0 1240.7H99.6Q106.1 1240.7 106.1 1247.2V1270.3Z" fill="url(#hg5)"/>
<path d="M-116.5 1270.3V1247.2Q-116.5 1240.7 -110.0 1240.7H99.6Q106.1 1240.7 106.1 1247.2V1270.3Z" fill="url(#hgloss)"/>
<path d="M-112 1242.2H101.6" stroke="#fff" stroke-opacity="0.22" stroke-width="1.5"/>
<path d="M78.3 1284.1H86.3L92.3 1293.1L86.3 1302.1H78.3Q77.3 1302.1 77.3 1301.1V1285.1Q77.3 1284.1 78.3 1284.1Z" fill="#f4f4f4"/>
<path d="M78.3 1320H86.3L92.3 1329L86.3 1338H78.3Q77.3 1338 77.3 1337V1321Q77.3 1320 78.3 1320Z" fill="#f4f4f4"/>
<text x="39.3" y="1298.8" font-family="Liberation Sans" font-size="16" font-weight="normal" font-style="normal" fill="#e6e6e6" text-anchor="start" textLength="31.3" lengthAdjust="spacingAndGlyphs">True</text>
<text x="33.8" y="1334.5" font-family="Liberation Sans" font-size="16" font-weight="normal" font-style="normal" fill="#e6e6e6" text-anchor="start" textLength="36.8" lengthAdjust="spacingAndGlyphs">False</text>
<rect x="555" y="382.3" width="355.5" height="108.4" rx="8" fill="#000" fill-opacity="0.45" filter="url(#blur2)"/>
<rect x="554.9" y="379.2" width="353.7" height="106.60000000000001" rx="7.5" fill="#1a1c1a" fill-opacity="0.90" stroke="#0a0a0a" stroke-opacity="0.95" stroke-width="1.8"/>
<path d="M555.5 409.3V386.3Q555.5 379.8 562.0 379.8H901.5Q908.0 379.8 908.0 386.3V409.3Z" fill="url(#hg6)"/>
<path d="M555.5 409.3V386.3Q555.5 379.8 562.0 379.8H901.5Q908.0 379.8 908.0 386.3V409.3Z" fill="url(#hgloss)"/>
<path d="M560 381.3H903.5" stroke="#fff" stroke-opacity="0.22" stroke-width="1.5"/>
<path d="M571.5 405Q576 405.5 578.5 397L581.5 389Q583.5 384.5 589 385.5" fill="none" stroke="#64b4f0" stroke-width="2.4" stroke-linecap="round"/><path d="M575.5 392.5H585" stroke="#64b4f0" stroke-width="2"/>
<text x="594.8" y="401.4" font-family="Liberation Sans" font-size="16" font-weight="bold" font-style="normal" fill="#1a2630" text-anchor="start" textLength="277.4" lengthAdjust="spacingAndGlyphs">Clear and Invalidate Timer by Handle</text><text x="593.8" y="400.4" font-family="Liberation Sans" font-size="16" font-weight="bold" font-style="normal" fill="#eef2f4" text-anchor="start" textLength="277.4" lengthAdjust="spacingAndGlyphs">Clear and Invalidate Timer by Handle</text>
<path d="M571.1 423.1H579.1L585.1 432.1L579.1 441.1H571.1Q570.1 441.1 570.1 440.1V424.1Q570.1 423.1 571.1 423.1Z" fill="#f4f4f4"/>
<path d="M879.8 423.1H887.8L893.8 432.1L887.8 441.1H879.8Q878.8 441.1 878.8 440.1V424.1Q878.8 423.1 879.8 423.1Z" fill="#f4f4f4"/>
<path d="M577.5 459L584.5 466L577.5 473L570.5 466Z" fill="#1b5fd0"/>
<text x="591.6" y="472.7" font-family="Liberation Sans" font-size="16" font-weight="normal" font-style="normal" fill="#e6e6e6" text-anchor="start" textLength="49.4" lengthAdjust="spacingAndGlyphs">Handle</text>
<rect x="303" y="550.2" width="172.5" height="42" rx="21" fill="#000" fill-opacity="0.45" filter="url(#blur2)"/>
<rect x="303" y="547.2" width="170.5" height="40" rx="20" fill="none" stroke="#1c1c1c" stroke-width="1.8"/>
<rect x="304" y="548.2" width="168.5" height="38" rx="19" fill="url(#cmpfill)" fill-opacity="0.9"/>
<g clip-path="url(#cl8)" mask="url(#mk10)"><rect x="302" y="548.2" width="172.5" height="30" fill="url(#vg9)"/></g>
<path d="M323 549.0H453.5" stroke="#fff" stroke-opacity="0.35" stroke-width="1.6"/>
<circle cx="446.2" cy="567.2" r="7.5" fill="#0a5ee0"/><path d="M450.2 562.7L456.7 567.2L450.2 571.7Z" fill="#0a5ee0"/>
<text x="348.0" y="573.4" font-family="Liberation Sans" font-size="16" font-weight="normal" font-style="normal" fill="#2a2a2a" text-anchor="start" textLength="81.9" lengthAdjust="spacingAndGlyphs">Bleed Timer</text><text x="347.0" y="572.4" font-family="Liberation Sans" font-size="16" font-weight="normal" font-style="normal" fill="#ececec" text-anchor="start" textLength="81.9" lengthAdjust="spacingAndGlyphs">Bleed Timer</text>
<rect x="1080.1" y="403.6" width="238.7" height="95.4" rx="15" fill="#000" fill-opacity="0.45" filter="url(#blur2)"/>
<rect x="1080.1" y="400.6" width="236.7" height="93.4" rx="14" fill="none" stroke="#1c1c1c" stroke-width="1.8"/>
<rect x="1081.1" y="401.6" width="234.7" height="91.4" rx="13" fill="url(#cmpfill)" fill-opacity="0.9"/>
<g clip-path="url(#cl13)" mask="url(#mk15)"><rect x="1079.1" y="401.6" width="238.7" height="42" fill="url(#vg14)"/></g>
<path d="M1094.1 402.40000000000003H1302.8" stroke="#fff" stroke-opacity="0.35" stroke-width="1.6"/>
<text x="1185.6" y="425.8" font-family="Liberation Sans" font-size="15" font-weight="bold" font-style="normal" fill="#eeeeee" text-anchor="start" textLength="27.7" lengthAdjust="spacingAndGlyphs">SET</text>
<path d="M1099.0 423H1107.0L1113.0 432L1107.0 441H1099.0Q1098.0 441 1098.0 440V424Q1098.0 423 1099.0 423Z" fill="#f4f4f4"/>
<path d="M1285.0 423H1293.0L1299.0 432L1293.0 441H1285.0Q1284.0 441 1284.0 440V424Q1284.0 423 1285.0 423Z" fill="#f4f4f4"/>
<circle cx="1105.8" cy="470.7" r="5.6" fill="#1a1a1a" fill-opacity="0.9" stroke="#8a0a0a" stroke-width="2.6"/><path d="M1109.8 466.2L1116.3 470.7L1109.8 475.2Z" fill="#8a0a0a"/>
<text x="1124.5" y="472.8" font-family="Liberation Sans" font-size="16" font-weight="normal" font-style="normal" fill="#ececec" text-anchor="start" textLength="76.2" lengthAdjust="spacingAndGlyphs">Is Bleeding</text>
<rect x="1213.0" y="461.8" width="17.300000000000047" height="18.29999999999999" rx="3.5" fill="#000" fill-opacity="0.08" stroke="#e6e6e6" stroke-width="2.2"/>
<circle cx="1288" cy="466.2" r="7" fill="#a00000"/><path d="M1292 461.7L1298.5 466.2L1292 470.7Z" fill="#a00000"/>
<rect x="1374.2" y="340.6" width="373.4" height="188.7" rx="8" fill="#000" fill-opacity="0.45" filter="url(#blur2)"/>
<rect x="1374.1000000000001" y="337.5" width="371.59999999999997" height="186.89999999999998" rx="7.5" fill="#1a1c1a" fill-opacity="0.90" stroke="#0a0a0a" stroke-opacity="0.95" stroke-width="1.8"/>
<path d="M1374.7 409.6V344.6Q1374.7 338.1 1381.2 338.1H1738.6Q1745.1 338.1 1745.1 344.6V409.6Z" fill="url(#hg17)"/>
<path d="M1374.7 409.6V344.6Q1374.7 338.1 1381.2 338.1H1738.6Q1745.1 338.1 1745.1 344.6V409.6Z" fill="url(#hgloss)"/>
<path d="M1379.2 339.6H1740.6" stroke="#fff" stroke-opacity="0.22" stroke-width="1.5"/>
<path d="M1395.9 344.4L1403.9 352.4L1395.9 360.4L1387.9 352.4Z" fill="none" stroke="#f0f0f0" stroke-width="2.6" stroke-linejoin="miter"/><path d="M1388.4 355.4L1391.4 358.4" stroke="#3a5060" stroke-width="2.5"/>
<text x="1414.6" y="359.4" font-family="Liberation Sans" font-size="16" font-weight="bold" font-style="normal" fill="#1a2630" text-anchor="start" textLength="161.4" lengthAdjust="spacingAndGlyphs">Client Set Is Bleeding</text><text x="1413.6" y="358.4" font-family="Liberation Sans" font-size="16" font-weight="bold" font-style="normal" fill="#f2f4f4" text-anchor="start" textLength="161.4" lengthAdjust="spacingAndGlyphs">Client Set Is Bleeding</text>
<text x="1413.6" y="384.0" font-family="Liberation Sans" font-size="16" font-weight="normal" font-style="italic" fill="#aab49c" text-anchor="start" textLength="293.4" lengthAdjust="spacingAndGlyphs">Target is BP Player Inventory Component</text>
<text x="1413.6" y="401.0" font-family="Liberation Sans" font-size="16" font-weight="normal" font-style="italic" fill="#aab49c" text-anchor="start" textLength="274.0" lengthAdjust="spacingAndGlyphs">Replicated To Owning Client (if server)</text>
<path d="M1390.5 422.8H1398.5L1404.5 431.8L1398.5 440.8H1390.5Q1389.5 440.8 1389.5 439.8V423.8Q1389.5 422.8 1390.5 422.8Z" fill="#f4f4f4"/>
<path d="M1716.5 422.8H1724.5L1730.5 431.8L1724.5 440.8H1716.5Q1715.5 440.8 1715.5 439.8V423.8Q1715.5 422.8 1716.5 422.8Z" fill="#f4f4f4"/>
<circle cx="1397.3" cy="469.4" r="5.6" fill="#1a1a1a" fill-opacity="0.9" stroke="#1a80c0" stroke-width="2.6"/><path d="M1401.3 464.9L1407.8 469.4L1401.3 473.9Z" fill="#1a80c0"/>
<text x="1415.0" y="471.7" font-family="Liberation Sans" font-size="16" font-weight="normal" font-style="normal" fill="#e6e6e6" text-anchor="start" textLength="44.4" lengthAdjust="spacingAndGlyphs">Target</text>
<rect x="1469.45" y="458.55" width="37.299999999999955" height="21.69999999999999" fill="none" stroke="#d0d0d0" stroke-width="1.5" rx="1.5"/><text x="1474.9" y="474.8" font-family="Liberation Sans" font-size="15" font-weight="normal" font-style="normal" fill="#dcdcdc" text-anchor="start" textLength="24.0" lengthAdjust="spacingAndGlyphs">self</text>
<circle cx="1396.5" cy="505.9" r="7" fill="#a80000"/><path d="M1400.5 501.4L1407.0 505.9L1400.5 510.4Z" fill="#a80000"/>
<text x="1415.0" y="512.9" font-family="Liberation Sans" font-size="16" font-weight="normal" font-style="normal" fill="#e6e6e6" text-anchor="start" textLength="77.0" lengthAdjust="spacingAndGlyphs">Is Bleeding</text>
<rect x="2970.3" y="949.5" width="219.2" height="94.6" rx="15" fill="#000" fill-opacity="0.45" filter="url(#blur2)"/>
<rect x="2970.3" y="946.5" width="217.2" height="92.6" rx="14" fill="none" stroke="#1c1c1c" stroke-width="1.8"/>
<rect x="2971.3" y="947.5" width="215.2" height="90.6" rx="13" fill="url(#cmpfill)" fill-opacity="0.9"/>
<g clip-path="url(#cl19)" mask="url(#mk21)"><rect x="2969.3" y="947.5" width="219.2" height="42" fill="url(#vg20)"/></g>
<path d="M2984.3 948.3H3173.5" stroke="#fff" stroke-opacity="0.35" stroke-width="1.6"/>
<text x="3065.3" y="971.6" font-family="Liberation Sans" font-size="15" font-weight="bold" font-style="normal" fill="#eeeeee" text-anchor="start" textLength="27.6" lengthAdjust="spacingAndGlyphs">SET</text>
<path d="M2989.0 969.2H2997.0L3003.0 978.2L2997.0 987.2H2989.0Q2988.0 987.2 2988.0 986.2V970.2Q2988.0 969.2 2989.0 969.2Z" fill="#f4f4f4"/>
<path d="M3155.5 969.2H3163.5L3169.5 978.2L3163.5 987.2H3155.5Q3154.5 987.2 3154.5 986.2V970.2Q3154.5 969.2 3155.5 969.2Z" fill="#f4f4f4"/>
<circle cx="2995.9" cy="1015.4" r="5.6" fill="#1a1a1a" fill-opacity="0.9" stroke="#30c090" stroke-width="2.6"/><path d="M2999.9 1010.9L3006.4 1015.4L2999.9 1019.9Z" fill="#30c090"/>
<text x="3014.4" y="1018.2" font-family="Liberation Sans" font-size="16" font-weight="normal" font-style="normal" fill="#ececec" text-anchor="start" textLength="44.7" lengthAdjust="spacingAndGlyphs">Health</text>
<rect x="3068.45" y="1004.75" width="38.5" height="21.299999999999955" fill="none" stroke="#d0d0d0" stroke-width="1.5" rx="1.5"/><text x="3075.3" y="1021.5" font-family="Liberation Sans" font-size="15" font-weight="normal" font-style="normal" fill="#dcdcdc" text-anchor="start" textLength="24.3" lengthAdjust="spacingAndGlyphs">100</text>
<circle cx="3157.6" cy="1012.5" r="5.6" fill="#1a1a1a" fill-opacity="0.9" stroke="#30c090" stroke-width="2.6"/><path d="M3161.6 1008.0L3168.1 1012.5L3161.6 1017.0Z" fill="#30c090"/>
<rect x="1101.1" y="1075.2" width="172.5" height="42.6" rx="21" fill="#000" fill-opacity="0.45" filter="url(#blur2)"/>
<rect x="1101.1" y="1072.2" width="170.5" height="40.6" rx="20" fill="none" stroke="#1c1c1c" stroke-width="1.8"/>
<rect x="1102.1" y="1073.2" width="168.5" height="38.6" rx="19" fill="url(#cmpfill)" fill-opacity="0.9"/>
<g clip-path="url(#cl24)" mask="url(#mk26)"><rect x="1100.1" y="1073.2" width="172.5" height="30" fill="url(#vg25)"/></g>
<path d="M1121.1 1074.0H1251.6" stroke="#fff" stroke-opacity="0.35" stroke-width="1.6"/>
<circle cx="1243.5" cy="1092.5" r="7.5" fill="#22dda8"/><path d="M1247.5 1088.0L1254.0 1092.5L1247.5 1097.0Z" fill="#22dda8"/>
<text x="1184.0" y="1098.6" font-family="Liberation Sans" font-size="16" font-weight="normal" font-style="normal" fill="#2a2a2a" text-anchor="start" textLength="44.3" lengthAdjust="spacingAndGlyphs">Health</text><text x="1183.0" y="1097.6" font-family="Liberation Sans" font-size="16" font-weight="normal" font-style="normal" fill="#ececec" text-anchor="start" textLength="44.3" lengthAdjust="spacingAndGlyphs">Health</text>
<rect x="1101.1" y="1159.3" width="172.5" height="42" rx="21" fill="#000" fill-opacity="0.45" filter="url(#blur2)"/>
<rect x="1101.1" y="1156.3" width="170.5" height="40" rx="20" fill="none" stroke="#1c1c1c" stroke-width="1.8"/>
<rect x="1102.1" y="1157.3" width="168.5" height="38" rx="19" fill="url(#cmpfill)" fill-opacity="0.9"/>
<g clip-path="url(#cl29)" mask="url(#mk31)"><rect x="1100.1" y="1157.3" width="172.5" height="30" fill="url(#vg30)"/></g>
<path d="M1121.1 1158.1H1251.6" stroke="#fff" stroke-opacity="0.35" stroke-width="1.6"/>
<circle cx="1243.5" cy="1176.6" r="7.5" fill="#0a5ee0"/><path d="M1247.5 1172.1L1254.0 1176.6L1247.5 1181.1Z" fill="#0a5ee0"/>
<text x="1131.3" y="1182.6" font-family="Liberation Sans" font-size="16" font-weight="normal" font-style="normal" fill="#2a2a2a" text-anchor="start" textLength="97.5" lengthAdjust="spacingAndGlyphs">Item Details L</text><text x="1130.3" y="1181.6" font-family="Liberation Sans" font-size="16" font-weight="normal" font-style="normal" fill="#ececec" text-anchor="start" textLength="97.5" lengthAdjust="spacingAndGlyphs">Item Details L</text>
<rect x="1311" y="1159.6" width="320.2" height="129.9" rx="8" fill="#000" fill-opacity="0.45" filter="url(#blur2)"/>
<rect x="1310.9" y="1156.5" width="318.4" height="128.1" rx="7.5" fill="#1a1c1a" fill-opacity="0.90" stroke="#0a0a0a" stroke-opacity="0.95" stroke-width="1.8"/>
<path d="M1311.5 1186.0V1163.6Q1311.5 1157.1 1318.0 1157.1H1622.2Q1628.7 1157.1 1628.7 1163.6V1186.0Z" fill="url(#hg33)"/>
<path d="M1311.5 1186.0V1163.6Q1311.5 1157.1 1318.0 1157.1H1622.2Q1628.7 1157.1 1628.7 1163.6V1186.0Z" fill="url(#hgloss)"/>
<path d="M1316 1158.6H1624.2" stroke="#fff" stroke-opacity="0.22" stroke-width="1.5"/>
<path d="M1341 1162L1334 1170.5L1341 1179M1326 1170.5H1336" fill="none" stroke="#f0f0f0" stroke-width="2"/><path d="M1326 1167H1336V1174H1326Z" fill="#6a9ae8"/>
<text x="1351.3" y="1177.5" font-family="Liberation Sans" font-size="16" font-weight="bold" font-style="normal" fill="#102040" text-anchor="start" textLength="155.1" lengthAdjust="spacingAndGlyphs">Break S_ItemDetails</text><text x="1350.3" y="1176.5" font-family="Liberation Sans" font-size="16" font-weight="bold" font-style="normal" fill="#f0f2f6" text-anchor="start" textLength="155.1" lengthAdjust="spacingAndGlyphs">Break S_ItemDetails</text>
<circle cx="1333.5" cy="1207" r="7" fill="#0a5ee0"/><path d="M1337.5 1202.5L1344.0 1207L1337.5 1211.5Z" fill="#0a5ee0"/>
<text x="1352.4" y="1213.2" font-family="Liberation Sans" font-size="16" font-weight="normal" font-style="normal" fill="#e6e6e6" text-anchor="start" textLength="98.6" lengthAdjust="spacingAndGlyphs">S Item Details</text>
<text x="1482.4" y="1213.2" font-family="Liberation Sans" font-size="16" font-weight="normal" font-style="normal" fill="#e6e6e6" text-anchor="start" textLength="105.9" lengthAdjust="spacingAndGlyphs">Holdable Class</text>
<circle cx="1604" cy="1207" r="5.6" fill="#1a1a1a" fill-opacity="0.9" stroke="#4a0ca8" stroke-width="2.6"/><path d="M1608 1202.5L1614.5 1207L1608 1211.5Z" fill="#4a0ca8"/>
<text x="1543.0" y="1245.7" font-family="Liberation Sans" font-size="16" font-weight="normal" font-style="normal" fill="#e6e6e6" text-anchor="start" textLength="44.2" lengthAdjust="spacingAndGlyphs">Health</text>
<circle cx="1604" cy="1240.5" r="7" fill="#22dda8"/><path d="M1608 1236.0L1614.5 1240.5L1608 1245.0Z" fill="#22dda8"/>
<path d="M1464.6 1265.6H1478.2L1471.4 1276Z" fill="#e0e0e0"/>
<rect x="1647" y="1117.6" width="178.1" height="72.4" rx="14" fill="#000" fill-opacity="0.45" filter="url(#blur2)"/>
<rect x="1647" y="1114.6" width="176.1" height="70.4" rx="13" fill="none" stroke="#1c1c1c" stroke-width="1.8"/>
<rect x="1648" y="1115.6" width="174.1" height="68.4" rx="12" fill="url(#cmpfill)" fill-opacity="0.9"/>
<path d="M1660 1116.3999999999999H1810.1" stroke="#fff" stroke-opacity="0.35" stroke-width="1.6"/>
<circle cx="1669" cy="1134.6" r="7" fill="#22dda8"/><path d="M1673 1130.1L1679.5 1134.6L1673 1139.1Z" fill="#22dda8"/>
<circle cx="1669" cy="1165" r="7" fill="#22dda8"/><path d="M1673 1160.5L1679.5 1165L1673 1169.5Z" fill="#22dda8"/>
<circle cx="1796.9" cy="1131.4" r="7" fill="#22dda8"/><path d="M1800.9 1126.9L1807.4 1131.4L1800.9 1135.9Z" fill="#22dda8"/>
<path d="M1727.5 1150.3H1744.5M1736 1141.8V1158.8" stroke="#b4b4b4" stroke-width="3.2"/>
<text x="1730.8" y="1178.6" font-family="Liberation Sans" font-size="16" font-weight="normal" font-style="normal" fill="#e8e8e8" text-anchor="start" textLength="54.5" lengthAdjust="spacingAndGlyphs">Add pin</text>
<path d="M1796 1172.5H1810.5M1803.2 1165.2V1179.8" stroke="#f4f4f4" stroke-width="3.4"/>
<rect x="1899.1" y="1075.2" width="176.2" height="75.2" rx="14" fill="#000" fill-opacity="0.45" filter="url(#blur2)"/>
<rect x="1899.1" y="1072.2" width="174.2" height="73.2" rx="13" fill="none" stroke="#1c1c1c" stroke-width="1.8"/>
<rect x="1900.1" y="1073.2" width="172.2" height="71.2" rx="12" fill="url(#cmpfill)" fill-opacity="0.9"/>
<path d="M1912.1 1074.0H2060.2999999999997" stroke="#fff" stroke-opacity="0.35" stroke-width="1.6"/>
<circle cx="1921.6" cy="1088.9" r="7" fill="#22dda8"/><path d="M1925.6 1084.4L1932.1 1088.9L1925.6 1093.4Z" fill="#22dda8"/>
<circle cx="1921.6" cy="1123.3" r="5.6" fill="#1a1a1a" fill-opacity="0.9" stroke="#30c090" stroke-width="2.6"/><path d="M1925.6 1118.8L1932.1 1123.3L1925.6 1127.8Z" fill="#30c090"/>
<circle cx="2047.2" cy="1108.8" r="7" fill="#a80000"/><path d="M2051.2 1104.3L2057.7 1108.8L2051.2 1113.3Z" fill="#a80000"/>
<rect x="1947.95" y="1114.65" width="38.299999999999955" height="19.199999999999818" fill="none" stroke="#d0d0d0" stroke-width="1.5" rx="1.5"/><text x="1953.0" y="1131.0" font-family="Liberation Sans" font-size="14" font-weight="normal" font-style="normal" fill="#d8d8d8" text-anchor="start" textLength="26.0" lengthAdjust="spacingAndGlyphs">100</text>
<path d="M1972 1101L1985 1108.5L1972 1116" fill="none" stroke="#b0b0b0" stroke-width="3.4"/><path d="M1989 1104.5H2002M1989 1111.5H2002" stroke="#b0b0b0" stroke-width="3.4"/>
<rect x="1899.1" y="1222.1" width="159" height="75.1" rx="14" fill="#000" fill-opacity="0.45" filter="url(#blur2)"/>
<rect x="1899.1" y="1219.1" width="157" height="73.1" rx="13" fill="none" stroke="#1c1c1c" stroke-width="1.8"/>
<rect x="1900.1" y="1220.1" width="155" height="71.1" rx="12" fill="url(#cmpfill)" fill-opacity="0.9"/>
<path d="M1912.1 1220.8999999999999H2043.1" stroke="#fff" stroke-opacity="0.35" stroke-width="1.6"/>
<circle cx="1921.6" cy="1236.2" r="7" fill="#22dda8"/><path d="M1925.6 1231.7L1932.1 1236.2L1925.6 1240.7Z" fill="#22dda8"/>
<circle cx="1921.6" cy="1270.6" r="5.6" fill="#1a1a1a" fill-opacity="0.9" stroke="#30c090" stroke-width="2.6"/><path d="M1925.6 1266.1L1932.1 1270.6L1925.6 1275.1Z" fill="#30c090"/>
<circle cx="2031" cy="1256.1" r="7" fill="#a80000"/><path d="M2035 1251.6L2041.5 1256.1L2035 1260.6Z" fill="#a80000"/>
<rect x="1947.95" y="1260.95" width="21.700000000000045" height="20.299999999999955" fill="none" stroke="#d0d0d0" stroke-width="1.5" rx="1.5"/><text x="1953.5" y="1277.5" font-family="Liberation Sans" font-size="14" font-weight="normal" font-style="normal" fill="#d8d8d8" text-anchor="start" textLength="10.0" lengthAdjust="spacingAndGlyphs">0</text>
<path d="M1975 1249L1962 1256.5L1975 1264" fill="none" stroke="#b0b0b0" stroke-width="3.4"/><path d="M1980 1252.5H1993M1980 1259.5H1993" stroke="#b0b0b0" stroke-width="3.4"/>
<rect x="786" y="1285.6" width="186.8" height="115.4" rx="8" fill="#000" fill-opacity="0.45" filter="url(#blur2)"/>
<rect x="785.9" y="1282.5" width="185.0" height="113.60000000000001" rx="7.5" fill="#1a1c1a" fill-opacity="0.90" stroke="#0a0a0a" stroke-opacity="0.95" stroke-width="1.8"/>
<path d="M786.5 1312.5V1289.6Q786.5 1283.1 793.0 1283.1H963.8Q970.3 1283.1 970.3 1289.6V1312.5Z" fill="url(#hg40)"/>
<path d="M786.5 1312.5V1289.6Q786.5 1283.1 793.0 1283.1H963.8Q970.3 1283.1 970.3 1289.6V1312.5Z" fill="url(#hgloss)"/>
<path d="M791 1284.6H965.8" stroke="#fff" stroke-opacity="0.22" stroke-width="1.5"/>
<rect x="798.2" y="1287.2" width="19.8" height="19.2" fill="#d6cfae"/><rect x="798.2" y="1287.2" width="19.8" height="6.144" fill="#efefe6"/><path d="M798.2 1293.728H818.0" stroke="#8a8470" stroke-width="1.4"/>
<text x="826.5" y="1304.4" font-family="Liberation Sans" font-size="16" font-weight="bold" font-style="normal" fill="#301040" text-anchor="start" textLength="92.1" lengthAdjust="spacingAndGlyphs">Return Node</text><text x="825.5" y="1303.4" font-family="Liberation Sans" font-size="16" font-weight="bold" font-style="normal" fill="#f4eef6" text-anchor="start" textLength="92.1" lengthAdjust="spacingAndGlyphs">Return Node</text>
<path d="M801.8 1325.8H809.8L815.8 1334.8L809.8 1343.8H801.8Q800.8 1343.8 800.8 1342.8V1326.8Q800.8 1325.8 801.8 1325.8Z" fill="#f4f4f4"/>
<circle cx="808.8" cy="1373.2" r="5.6" fill="#1a1a1a" fill-opacity="0.9" stroke="#6a0808" stroke-width="2.6"/><path d="M812.8 1368.7L819.3 1373.2L812.8 1377.7Z" fill="#6a0808"/>
<text x="827.6" y="1375.3" font-family="Liberation Sans" font-size="16" font-weight="normal" font-style="normal" fill="#e8e8e8" text-anchor="start" textLength="92.1" lengthAdjust="spacingAndGlyphs">Return Value</text>
<rect x="931.5" y="1364.8" width="16.300000000000047" height="17.900000000000183" rx="3.5" fill="#000" fill-opacity="0.08" stroke="#e6e6e6" stroke-width="2.2"/>
<rect x="2970.1" y="1138.5" width="186.2" height="115.4" rx="8" fill="#000" fill-opacity="0.45" filter="url(#blur2)"/>
<rect x="2970.0" y="1135.4" width="184.39999999999998" height="113.60000000000001" rx="7.5" fill="#1a1c1a" fill-opacity="0.90" stroke="#0a0a0a" stroke-opacity="0.95" stroke-width="1.8"/>
<path d="M2970.6 1165.4V1142.5Q2970.6 1136.0 2977.1 1136.0H3147.2999999999997Q3153.7999999999997 1136.0 3153.7999999999997 1142.5V1165.4Z" fill="url(#hg41)"/>
<path d="M2970.6 1165.4V1142.5Q2970.6 1136.0 2977.1 1136.0H3147.2999999999997Q3153.7999999999997 1136.0 3153.7999999999997 1142.5V1165.4Z" fill="url(#hgloss)"/>
<path d="M2975.1 1137.5H3149.2999999999997" stroke="#fff" stroke-opacity="0.22" stroke-width="1.5"/>
<rect x="2982.3" y="1140.1000000000001" width="19.8" height="19.2" fill="#d6cfae"/><rect x="2982.3" y="1140.1000000000001" width="19.8" height="6.144" fill="#efefe6"/><path d="M2982.3 1146.6280000000002H3002.1000000000004" stroke="#8a8470" stroke-width="1.4"/>
<text x="3010.6" y="1157.3" font-family="Liberation Sans" font-size="16" font-weight="bold" font-style="normal" fill="#301040" text-anchor="start" textLength="92.1" lengthAdjust="spacingAndGlyphs">Return Node</text><text x="3009.6" y="1156.3" font-family="Liberation Sans" font-size="16" font-weight="bold" font-style="normal" fill="#f4eef6" text-anchor="start" textLength="92.1" lengthAdjust="spacingAndGlyphs">Return Node</text>
<path d="M2985.8999999999996 1178.7H2993.8999999999996L2999.8999999999996 1187.7L2993.8999999999996 1196.7H2985.8999999999996Q2984.8999999999996 1196.7 2984.8999999999996 1195.7V1179.7Q2984.8999999999996 1178.7 2985.8999999999996 1178.7Z" fill="#f4f4f4"/>
<circle cx="2992.8999999999996" cy="1226.1000000000001" r="5.6" fill="#1a1a1a" fill-opacity="0.9" stroke="#6a0808" stroke-width="2.6"/><path d="M2996.8999999999996 1221.6000000000001L3003.3999999999996 1226.1000000000001L2996.8999999999996 1230.6000000000001Z" fill="#6a0808"/>
<text x="3011.7" y="1228.2" font-family="Liberation Sans" font-size="16" font-weight="normal" font-style="normal" fill="#e8e8e8" text-anchor="start" textLength="92.1" lengthAdjust="spacingAndGlyphs">Return Value</text>
<rect x="3115.5999999999995" y="1217.7" width="16.300000000000274" height="17.900000000000183" rx="3.5" fill="#000" fill-opacity="0.08" stroke="#e6e6e6" stroke-width="2.2"/>
<rect x="2970.1" y="1348.4" width="178.2" height="88.4" rx="15" fill="#000" fill-opacity="0.45" filter="url(#blur2)"/>
<rect x="2970.1" y="1345.4" width="176.2" height="86.4" rx="14" fill="none" stroke="#1c1c1c" stroke-width="1.8"/>
<rect x="2971.1" y="1346.4" width="174.2" height="84.4" rx="13" fill="url(#cmpfill)" fill-opacity="0.9"/>
<g clip-path="url(#cl43)" mask="url(#mk45)"><rect x="2969.1" y="1346.4" width="178.2" height="40" fill="url(#vg44)"/></g>
<path d="M2984.1 1347.2H3132.2999999999997" stroke="#fff" stroke-opacity="0.35" stroke-width="1.6"/>
<text x="3045.7" y="1370.8" font-family="Liberation Sans" font-size="15" font-weight="bold" font-style="normal" fill="#eeeeee" text-anchor="start" textLength="27.7" lengthAdjust="spacingAndGlyphs">SET</text>
<path d="M2989.5 1368.4H2997.5L3003.5 1377.4L2997.5 1386.4H2989.5Q2988.5 1386.4 2988.5 1385.4V1369.4Q2988.5 1368.4 2989.5 1368.4Z" fill="#f4f4f4"/>
<path d="M3115.8 1368.4H3123.8L3129.8 1377.4L3123.8 1386.4H3115.8Q3114.8 1386.4 3114.8 1385.4V1369.4Q3114.8 1368.4 3115.8 1368.4Z" fill="#f4f4f4"/>
<circle cx="2994.2" cy="1411.7" r="7" fill="#22dda8"/><path d="M2998.2 1407.2L3004.7 1411.7L2998.2 1416.2Z" fill="#22dda8"/>
<text x="3014.0" y="1417.0" font-family="Liberation Sans" font-size="16" font-weight="normal" font-style="normal" fill="#ececec" text-anchor="start" textLength="45.0" lengthAdjust="spacingAndGlyphs">Health</text>
<circle cx="3118.3" cy="1411.7" r="5.6" fill="#1a1a1a" fill-opacity="0.9" stroke="#30c090" stroke-width="2.6"/><path d="M3122.3 1407.2L3128.8 1411.7L3122.3 1416.2Z" fill="#30c090"/>
<rect x="324.9" y="1243.6" width="430.2" height="334.6" rx="8" fill="#000" fill-opacity="0.45" filter="url(#blur2)"/>
<rect x="324.79999999999995" y="1240.5" width="428.4" height="332.8" rx="7.5" fill="#1a1c1a" fill-opacity="0.90" stroke="#0a0a0a" stroke-opacity="0.95" stroke-width="1.8"/>
<path d="M325.4 1312.3V1247.6Q325.4 1241.1 331.9 1241.1H746.0999999999999Q752.5999999999999 1241.1 752.5999999999999 1247.6V1312.3Z" fill="url(#hg47)"/>
<path d="M325.4 1312.3V1247.6Q325.4 1241.1 331.9 1241.1H746.0999999999999Q752.5999999999999 1241.1 752.5999999999999 1247.6V1312.3Z" fill="url(#hgloss)"/>
<path d="M329.9 1242.6H748.0999999999999" stroke="#fff" stroke-opacity="0.22" stroke-width="1.5"/>
<path d="M346.0 1248.0L354.0 1256.0L346.0 1264.0L338.0 1256.0Z" fill="none" stroke="#f0f0f0" stroke-width="2.6" stroke-linejoin="miter"/><path d="M338.5 1259.0L341.5 1262.0" stroke="#3a5060" stroke-width="2.5"/>
<text x="364.1" y="1262.6" font-family="Liberation Sans" font-size="16" font-weight="bold" font-style="normal" fill="#1a2630" text-anchor="start" textLength="191.1" lengthAdjust="spacingAndGlyphs">Client Create Notification</text><text x="363.1" y="1261.6" font-family="Liberation Sans" font-size="16" font-weight="bold" font-style="normal" fill="#f2f4f4" text-anchor="start" textLength="191.1" lengthAdjust="spacingAndGlyphs">Client Create Notification</text>
<text x="363.0" y="1287.0" font-family="Liberation Sans" font-size="16" font-weight="normal" font-style="italic" fill="#aab49c" text-anchor="start" textLength="295.0" lengthAdjust="spacingAndGlyphs">Target is BP Player Inventory Component</text>
<text x="363.0" y="1304.7" font-family="Liberation Sans" font-size="16" font-weight="normal" font-style="italic" fill="#aab49c" text-anchor="start" textLength="351.9" lengthAdjust="spacingAndGlyphs">RELIABLE Replicated To Owning Client (if server)</text>
<path d="M340.1 1326H348.1L354.1 1335L348.1 1344H340.1Q339.1 1344 339.1 1343V1327Q339.1 1326 340.1 1326Z" fill="#f4f4f4"/>
<path d="M723.6 1326H731.6L737.6 1335L731.6 1344H723.6Q722.6 1344 722.6 1343V1327Q722.6 1326 723.6 1326Z" fill="#f4f4f4"/>
<circle cx="347.9" cy="1373" r="5.6" fill="#1a1a1a" fill-opacity="0.9" stroke="#1a80c0" stroke-width="2.6"/><path d="M351.9 1368.5L358.4 1373L351.9 1377.5Z" fill="#1a80c0"/>
<text x="364.4" y="1375.5" font-family="Liberation Sans" font-size="16" font-weight="normal" font-style="normal" fill="#e6e6e6" text-anchor="start" textLength="45.6" lengthAdjust="spacingAndGlyphs">Target</text>
<rect x="419.55" y="1361.75" width="36.89999999999998" height="21.09999999999991" fill="none" stroke="#d0d0d0" stroke-width="1.5" rx="1.5"/><text x="424.3" y="1379.3" font-family="Liberation Sans" font-size="15" font-weight="normal" font-style="normal" fill="#dcdcdc" text-anchor="start" textLength="24.8" lengthAdjust="spacingAndGlyphs">self</text>
<circle cx="347.9" cy="1424.4" r="5.6" fill="#1a1a1a" fill-opacity="0.9" stroke="#106858" stroke-width="2.6"/><path d="M351.9 1419.9L358.4 1424.4L351.9 1428.9Z" fill="#106858"/>
<text x="364.4" y="1416.0" font-family="Liberation Sans" font-size="16" font-weight="normal" font-style="normal" fill="#e6e6e6" text-anchor="start" textLength="124.0" lengthAdjust="spacingAndGlyphs">Notification Type</text>
<rect x="373.2" y="1420.3" width="222.2" height="25.3" rx="1.5" fill="url(#ddfill)"/>
<text x="378.3" y="1438.8" font-family="Liberation Sans" font-size="14" font-weight="normal" font-style="normal" fill="#1e1e1e" text-anchor="start" textLength="78.4" lengthAdjust="spacingAndGlyphs">Information</text>
<path d="M577 1434.5H588L582.5 1440Z" fill="#111"/>
<circle cx="347.9" cy="1474.2" r="5.6" fill="#1a1a1a" fill-opacity="0.9" stroke="#d020c8" stroke-width="2.6"/><path d="M351.9 1469.7L358.4 1474.2L351.9 1478.7Z" fill="#d020c8"/>
<text x="364.4" y="1479.3" font-family="Liberation Sans" font-size="16" font-weight="normal" font-style="normal" fill="#e6e6e6" text-anchor="start" textLength="93.6" lengthAdjust="spacingAndGlyphs">Warning Text</text>
<rect x="467.15" y="1465.35" width="89.60000000000002" height="21.300000000000182" fill="none" stroke="#d0d0d0" stroke-width="1.5" rx="1.5"/><text x="473.2" y="1483.1" font-family="Liberation Sans" font-size="15" font-weight="normal" font-style="normal" fill="#dcdcdc" text-anchor="start" textLength="77.2" lengthAdjust="spacingAndGlyphs">Full Health</text>
<circle cx="347.9" cy="1516" r="5.6" fill="#1a1a1a" fill-opacity="0.9" stroke="#7a0808" stroke-width="2.6"/><path d="M351.9 1511.5L358.4 1516L351.9 1520.5Z" fill="#7a0808"/>
<text x="364.4" y="1518.5" font-family="Liberation Sans" font-size="16" font-weight="normal" font-style="normal" fill="#e6e6e6" text-anchor="start" textLength="134.1" lengthAdjust="spacingAndGlyphs">Notification Image</text>
<rect x="508.5" y="1506.5" width="19" height="19.5" rx="3" fill="#b8b8b8" stroke="#d8d8d8" stroke-width="1.2"/><path d="M512 1515.5L516.5 1521L524 1510" fill="none" stroke="#3a3a3a" stroke-width="2.4"/>
<circle cx="347.9" cy="1554" r="5.6" fill="#1a1a1a" fill-opacity="0.9" stroke="#0c44b0" stroke-width="2.6"/><path d="M351.9 1549.5L358.4 1554L351.9 1558.5Z" fill="#0c44b0"/>
<text x="364.4" y="1560.3" font-family="Liberation Sans" font-size="16" font-weight="normal" font-style="normal" fill="#e6e6e6" text-anchor="start" textLength="31.6" lengthAdjust="spacingAndGlyphs">Item</text>
<text x="3047.0" y="1847.0" font-family="Liberation Sans" font-size="98" font-weight="bold" font-style="normal" fill="#4a4a4a" text-anchor="start" textLength="433.0" lengthAdjust="spacingAndGlyphs">BLUEPRINT</text>
<rect x="0" y="0" width="3489" height="60" fill="url(#topbar)"/>
<path d="M8.7 26.2L24 8.7V19.8H33.2V33.8H24V43.7Z" fill="#a4a4a4"/>
<path d="M97.6 26.2L82.5 8.7V19.8H72V33.8H82.5V43.7Z" fill="#a4a4a4"/>
<text x="1465.0" y="46.0" font-family="Liberation Serif" font-size="42" font-weight="normal" font-style="italic" fill="#111" text-anchor="start" textLength="27.0" lengthAdjust="spacingAndGlyphs">f</text><text x="1463.0" y="44.0" font-family="Liberation Serif" font-size="42" font-weight="normal" font-style="italic" fill="url(#fgrad)" text-anchor="start" textLength="27.0" lengthAdjust="spacingAndGlyphs">f</text>
<text x="1516.9" y="37.7" font-family="Liberation Sans" font-size="27" font-weight="normal" font-style="normal" fill="#a4a4a4" text-anchor="start" textLength="401.0" lengthAdjust="spacingAndGlyphs">BP_PlayerInventoryComponent</text>
<path d="M1930 19L1941 28.5L1930 38" fill="none" stroke="#c0c0c0" stroke-width="2.6"/>
<text x="1958.5" y="37.7" font-family="Liberation Sans" font-size="27" font-weight="normal" font-style="normal" fill="#c4c4c4" text-anchor="start" textLength="184.5" lengthAdjust="spacingAndGlyphs">Consume Item</text>
<text x="3384.4" y="34.1" font-family="Liberation Sans" font-size="30" font-weight="bold" font-style="normal" fill="#3c3c3c" text-anchor="start" textLength="99.6" lengthAdjust="spacingAndGlyphs">Zoom -1</text>
</svg>
</body></html>
